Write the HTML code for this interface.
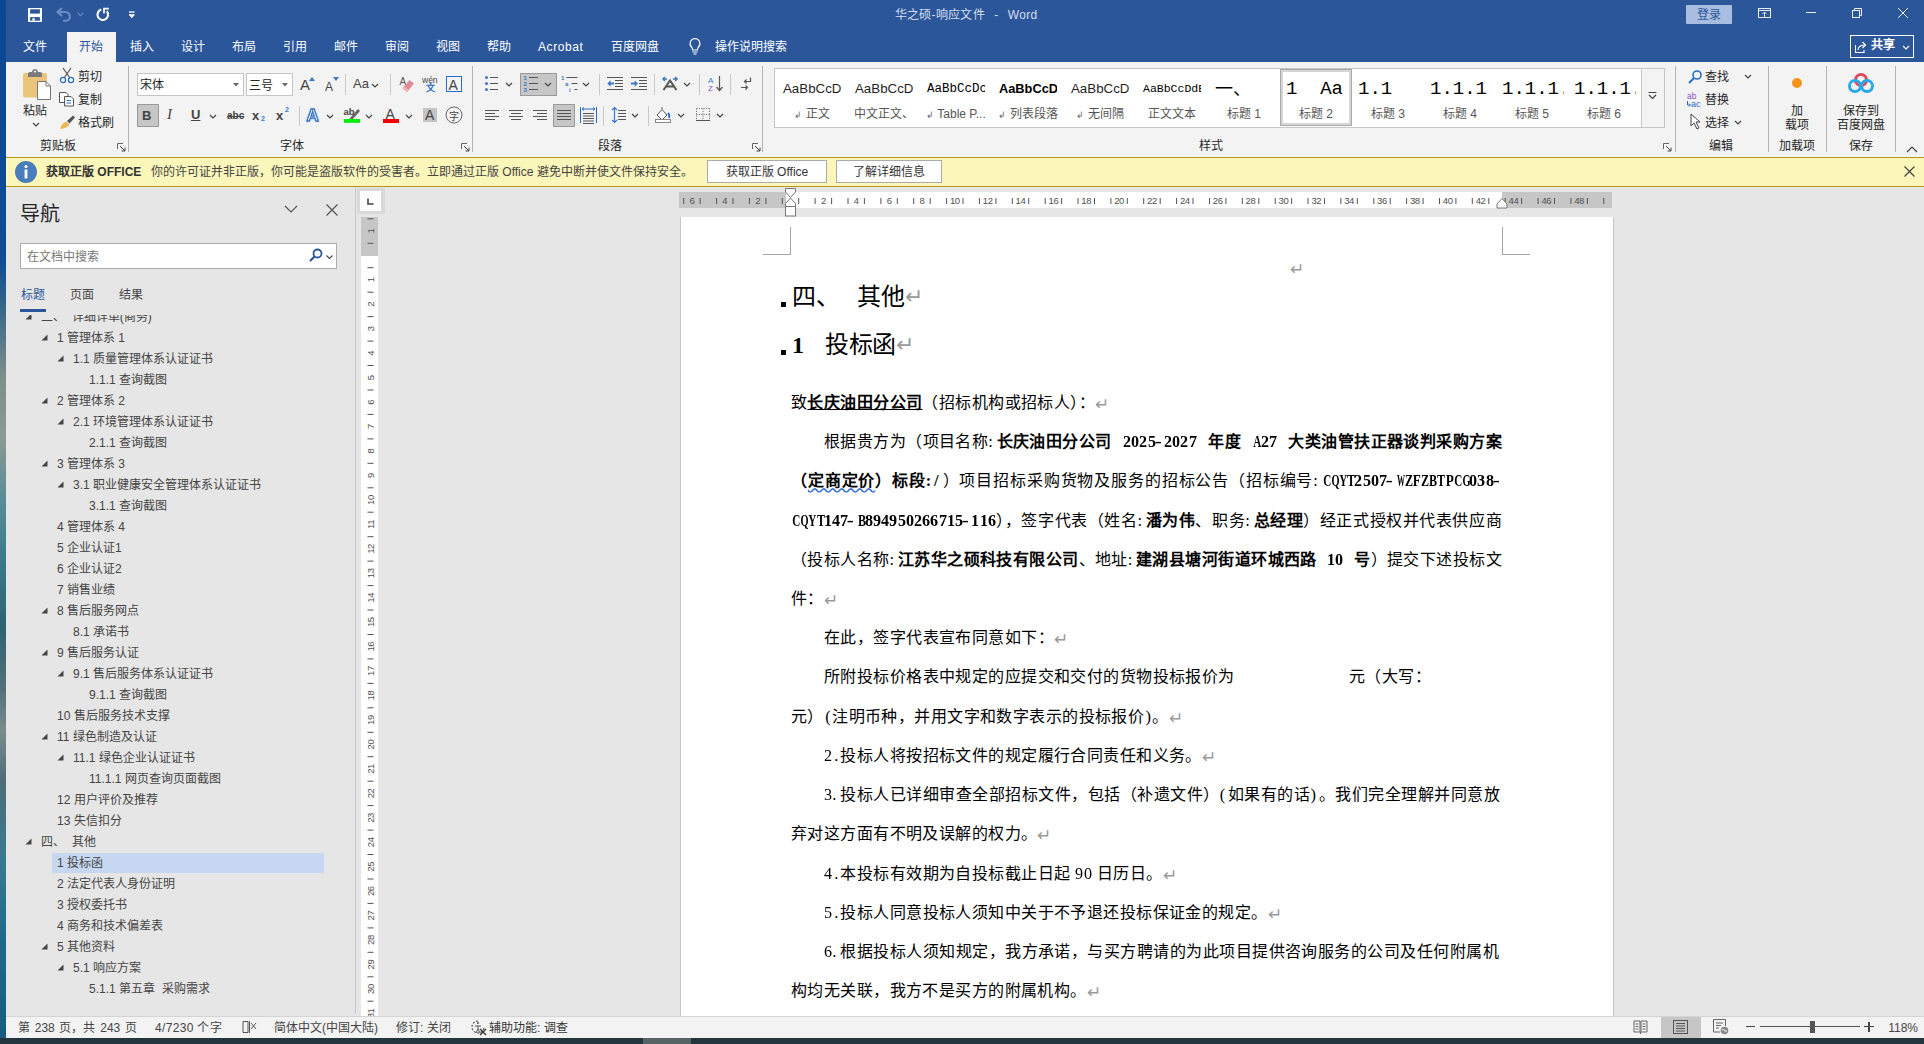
<!DOCTYPE html><html lang="zh-CN"><head><meta charset="utf-8"><style>
*{margin:0;padding:0;box-sizing:border-box}
html,body{width:1924px;height:1044px;overflow:hidden;background:#e6e6e6;font-family:"Liberation Sans",sans-serif}
.a{position:absolute}
.t{position:absolute;white-space:nowrap}
</style></head><body>
<div class="a" style="left:0px;top:0px;width:1924px;height:62px;background:#2b579a;"></div>
<div class="a" style="left:6px;top:62px;width:1918px;height:95px;background:#f3f3f3;"></div>
<div class="a" style="left:0px;top:0px;width:6px;height:1044px;background:linear-gradient(180deg,#0b4793 0%,#0e4c94 25%,#3b6a88 30%,#7d8f8c 36%,#8b9a92 42%,#5f8f98 47%,#3c7c8c 53%,#2d6372 60%,#52707a 66%,#7a8c8e 70%,#4c6c78 75%,#3a7a90 82%,#1d6a8c 90%,#175a80 100%)"></div>
<svg class="a" style="left:28px;top:8px;" width="14" height="14" viewBox="0 0 14 14"><rect x="0" y="0" width="14" height="14" rx="0.8" fill="#fff"/><rect x="2.1" y="1.3" width="9.8" height="4.3" fill="#2b579a"/><rect x="2.1" y="9.1" width="9.8" height="3.6" fill="#2b579a"/><rect x="4.3" y="10.3" width="2.5" height="2.4" fill="#fff"/></svg>
<svg class="a" style="left:55px;top:6px;" width="18" height="18" viewBox="0 0 18 18"><path d="M2.5 6 L6.5 2.5 M2.5 6 L6.5 9.5" fill="none" stroke="#6c8ec6" stroke-width="2.1" stroke-linecap="round"/><path d="M3 6 H10.5 A4.4 4.4 0 0 1 10.5 14.8 H9" fill="none" stroke="#6c8ec6" stroke-width="2.1" stroke-linecap="round"/></svg>
<svg class="a" style="left:77px;top:12px;" width="7" height="5" viewBox="0 0 7 5"><path d="M0.7 0.7 L3.5 3.8 L6.3 0.7" fill="none" stroke="#6c8ec6" stroke-width="1.1"/></svg>
<svg class="a" style="left:95px;top:6px;" width="16" height="17" viewBox="0 0 16 17"><path d="M6.3 3.6 A5.3 5.3 0 1 0 11.8 5.2" fill="none" stroke="#fff" stroke-width="2.1"/><path d="M9 7.6 V2.6 H13.8" fill="none" stroke="#fff" stroke-width="1.7"/></svg>
<svg class="a" style="left:128px;top:10px;" width="8" height="10" viewBox="0 0 8 10"><rect x="1" y="1.4" width="5.6" height="1.3" fill="#fff"/><rect x="1" y="4.2" width="5.6" height="1" fill="#fff"/><path d="M1 5 L6.6 5 L3.8 8.2 Z" fill="#fff"/></svg>
<div class="t" style="left:666px;width:600px;text-align:center;top:5.8px;line-height:18px;font-size:12px;color:#d5deee;font-weight:normal;font-family:'Liberation Sans', sans-serif;white-space:pre;letter-spacing:0.3px;word-spacing:1px">华之硕-响应文件  -  Word</div>
<div class="a" style="left:1686px;top:5px;width:46px;height:19px;background:#a8bddf;border-radius:1px"></div>
<div class="t" style="left:1409px;width:600px;text-align:center;top:5.8px;line-height:18px;font-size:12px;color:#2b579a;font-weight:normal;font-family:'Liberation Sans', sans-serif;">登录</div>
<svg class="a" style="left:1757px;top:7px;" width="15" height="12" viewBox="0 0 15 12"><rect x="1.5" y="1.5" width="12" height="9" fill="none" stroke="#e8eef7" stroke-width="1"/><line x1="2" y1="3.5" x2="13" y2="3.5" stroke="#e8eef7"/><path d="M5.5 7 L7.5 5 L9.5 7 M7.5 5 V10" fill="none" stroke="#e8eef7"/></svg>
<div class="a" style="left:1806px;top:12px;width:10px;height:1px;background:#e8eef7;"></div>
<svg class="a" style="left:1851px;top:7px;" width="12" height="12" viewBox="0 0 12 12"><rect x="1.5" y="3.5" width="7" height="7" fill="none" stroke="#e8eef7"/><path d="M3.5 3.5 V1.5 H10.5 V8.5 H8.5" fill="none" stroke="#e8eef7"/></svg>
<svg class="a" style="left:1897px;top:7px;" width="12" height="12" viewBox="0 0 12 12"><path d="M1 1 L11 11 M11 1 L1 11" stroke="#e8eef7" stroke-width="1"/></svg>
<div class="a" style="left:67px;top:32px;width:49px;height:30px;background:#f3f3f3;"></div>
<div class="t" style="left:23px;top:37.7px;line-height:18px;font-size:12px;color:#ffffff;font-weight:normal;font-family:'Liberation Sans', sans-serif;">文件</div>
<div class="t" style="left:79px;top:37.7px;line-height:18px;font-size:12px;color:#2b579a;font-weight:normal;font-family:'Liberation Sans', sans-serif;">开始</div>
<div class="t" style="left:130px;top:37.7px;line-height:18px;font-size:12px;color:#ffffff;font-weight:normal;font-family:'Liberation Sans', sans-serif;">插入</div>
<div class="t" style="left:181px;top:37.7px;line-height:18px;font-size:12px;color:#ffffff;font-weight:normal;font-family:'Liberation Sans', sans-serif;">设计</div>
<div class="t" style="left:232px;top:37.7px;line-height:18px;font-size:12px;color:#ffffff;font-weight:normal;font-family:'Liberation Sans', sans-serif;">布局</div>
<div class="t" style="left:283px;top:37.7px;line-height:18px;font-size:12px;color:#ffffff;font-weight:normal;font-family:'Liberation Sans', sans-serif;">引用</div>
<div class="t" style="left:334px;top:37.7px;line-height:18px;font-size:12px;color:#ffffff;font-weight:normal;font-family:'Liberation Sans', sans-serif;">邮件</div>
<div class="t" style="left:385px;top:37.7px;line-height:18px;font-size:12px;color:#ffffff;font-weight:normal;font-family:'Liberation Sans', sans-serif;">审阅</div>
<div class="t" style="left:436px;top:37.7px;line-height:18px;font-size:12px;color:#ffffff;font-weight:normal;font-family:'Liberation Sans', sans-serif;">视图</div>
<div class="t" style="left:487px;top:37.7px;line-height:18px;font-size:12px;color:#ffffff;font-weight:normal;font-family:'Liberation Sans', sans-serif;">帮助</div>
<div class="t" style="left:538px;top:37.7px;line-height:18px;font-size:12px;color:#ffffff;font-weight:normal;font-family:'Liberation Sans', sans-serif;letter-spacing:0.6px">Acrobat</div>
<div class="t" style="left:611px;top:37.7px;line-height:18px;font-size:12px;color:#ffffff;font-weight:normal;font-family:'Liberation Sans', sans-serif;">百度网盘</div>
<div class="t" style="left:715px;top:37.7px;line-height:18px;font-size:12px;color:#ffffff;font-weight:normal;font-family:'Liberation Sans', sans-serif;">操作说明搜索</div>
<svg class="a" style="left:688px;top:37px;" width="14" height="19" viewBox="0 0 14 19"><path d="M7 1.5 A5 5 0 0 1 10.5 10 Q9.5 11 9.5 13 H4.5 Q4.5 11 3.5 10 A5 5 0 0 1 7 1.5 Z" fill="none" stroke="#fff" stroke-width="1.1"/><line x1="4.5" y1="15" x2="9.5" y2="15" stroke="#fff"/><line x1="5.5" y1="17" x2="8.5" y2="17" stroke="#fff"/></svg>
<div class="a" style="left:1850px;top:35px;width:64px;height:23px;border:1px solid #fff"></div>
<svg class="a" style="left:1854px;top:40px;" width="14" height="14" viewBox="0 0 14 14"><path d="M1.5 5 V12.5 H10 V10" fill="none" stroke="#fff" stroke-width="1.1"/><path d="M4 10 Q4.5 5 11 5 M8.5 2 L11.5 5 L8.5 8" fill="none" stroke="#fff" stroke-width="1.1"/></svg>
<div class="t" style="left:1871px;top:36.0px;line-height:18px;font-size:12px;color:#fff;font-weight:bold;font-family:'Liberation Sans', sans-serif;">共享</div>
<svg class="a" style="left:1902px;top:45px;" width="8" height="6" viewBox="0 0 8 6"><path d="M1 1 L4 4 L7 1" fill="none" stroke="#fff" stroke-width="1.1"/></svg>
<div class="a" style="left:128px;top:66px;width:1px;height:86px;background:#b4b4b4;"></div>
<div class="a" style="left:472px;top:66px;width:1px;height:86px;background:#b4b4b4;"></div>
<div class="a" style="left:762px;top:66px;width:1px;height:86px;background:#b4b4b4;"></div>
<div class="a" style="left:1675px;top:66px;width:1px;height:86px;background:#b4b4b4;"></div>
<div class="a" style="left:1768px;top:66px;width:1px;height:86px;background:#b4b4b4;"></div>
<div class="a" style="left:1826px;top:66px;width:1px;height:86px;background:#b4b4b4;"></div>
<div class="a" style="left:1895px;top:66px;width:1px;height:86px;background:#b4b4b4;"></div>
<svg class="a" style="left:21px;top:67px;" width="32" height="34" viewBox="0 0 32 34"><rect x="2" y="6" width="24" height="24.5" rx="2" fill="#ebc47b"/><path d="M7 10 V6.5 Q7 5 9 5 H11 Q11.5 2 14 2 Q16.5 2 17 5 H19 Q21 5 21 6.5 V10 Z" fill="#7a7a7a"/><circle cx="14" cy="4.6" r="1.1" fill="#f3f3f3"/><path d="M16.5 14.5 H25 L29.5 19 V32.5 H16.5 Z" fill="#fff" stroke="#777" stroke-width="1"/><path d="M25 14.5 V19 H29.5" fill="none" stroke="#777" stroke-width="1"/></svg>
<div class="t" style="left:23px;top:102.2px;line-height:18px;font-size:12px;color:#262626;font-weight:normal;font-family:'Liberation Sans', sans-serif;">粘贴</div>
<svg class="a" style="left:32px;top:122px;" width="8" height="5" viewBox="0 0 8 5"><path d="M1 1 L4 4 L7 1" fill="none" stroke="#444" stroke-width="1.2"/></svg>
<svg class="a" style="left:59px;top:67px;" width="17" height="17" viewBox="0 0 17 17"><path d="M4 1 L11 11 M12 1 L5 11" stroke="#555" stroke-width="1.2"/><circle cx="4" cy="13" r="2.6" fill="none" stroke="#2b6cc4" stroke-width="1.2"/><circle cx="12" cy="13" r="2.6" fill="none" stroke="#2b6cc4" stroke-width="1.2"/></svg>
<div class="t" style="left:78px;top:68.2px;line-height:18px;font-size:12px;color:#262626;font-weight:normal;font-family:'Liberation Sans', sans-serif;">剪切</div>
<svg class="a" style="left:58px;top:91px;" width="17" height="16" viewBox="0 0 17 16"><path d="M1.5 1.5 H8 L10 3.5 V11.5 H1.5 Z" fill="#fff" stroke="#555"/><path d="M6.5 5.5 H13 L15.5 8 V15 H6.5 Z" fill="#fff" stroke="#555"/><path d="M8.5 9.5 H13 M8.5 12 H13" stroke="#2b6cc4"/></svg>
<div class="t" style="left:78px;top:91.2px;line-height:18px;font-size:12px;color:#262626;font-weight:normal;font-family:'Liberation Sans', sans-serif;">复制</div>
<svg class="a" style="left:58px;top:114px;" width="18" height="16" viewBox="0 0 18 16"><path d="M9 7 L15 1.5 L17 3.5 L11.5 9.5 Z" fill="#555"/><path d="M2 15 Q3 10 8 7.5 L11.5 10.5 Q9 14.5 2 15 Z" fill="#e9b85a"/></svg>
<div class="t" style="left:78px;top:114.2px;line-height:18px;font-size:12px;color:#262626;font-weight:normal;font-family:'Liberation Sans', sans-serif;">格式刷</div>
<div class="t" style="left:-242px;width:600px;text-align:center;top:137.2px;line-height:18px;font-size:12px;color:#262626;font-weight:normal;font-family:'Liberation Sans', sans-serif;">剪贴板</div>
<svg class="a" style="left:117px;top:143px;" width="9" height="9" viewBox="0 0 9 9"><path d="M0.5 6 V0.5 H6" fill="none" stroke="#666" stroke-width="1"/><path d="M3 3 L8 8 M4.5 8 H8 V4.5" fill="none" stroke="#444" stroke-width="1"/></svg>
<div class="a" style="left:137px;top:73px;width:107px;height:23px;background:#fff;border:1px solid #c6c6c6"></div>
<div class="t" style="left:140px;top:76.2px;line-height:18px;font-size:12px;color:#262626;font-weight:normal;font-family:'Liberation Sans', sans-serif;">宋体</div>
<svg class="a" style="left:233px;top:83px;" width="6" height="4" viewBox="0 0 6 4"><path d="M0 0 H6 L3 3.5 Z" fill="#666"/></svg>
<div class="a" style="left:246px;top:73px;width:47px;height:23px;background:#fff;border:1px solid #c6c6c6"></div>
<div class="t" style="left:249px;top:76.7px;line-height:18px;font-size:12px;color:#262626;font-weight:normal;font-family:'Liberation Sans', sans-serif;">三号</div>
<svg class="a" style="left:282px;top:83px;" width="6" height="4" viewBox="0 0 6 4"><path d="M0 0 H6 L3 3.5 Z" fill="#666"/></svg>
<div class="t" style="left:300px;top:74.0px;line-height:22px;font-size:15px;color:#444;font-weight:normal;font-family:'Liberation Sans', sans-serif;">A</div>
<svg class="a" style="left:309px;top:77px;" width="6" height="4" viewBox="0 0 6 4"><path d="M0 4 L3 0 L6 4 Z" fill="#3c78c3"/></svg>
<div class="t" style="left:325px;top:77.7px;line-height:18px;font-size:12px;color:#444;font-weight:normal;font-family:'Liberation Sans', sans-serif;">A</div>
<svg class="a" style="left:333px;top:77px;" width="6" height="4" viewBox="0 0 6 4"><path d="M0 0 L3 4 L6 0 Z" fill="#3c78c3"/></svg>
<div class="a" style="left:345px;top:74px;width:1px;height:21px;background:#c8c8c8;"></div>
<div class="t" style="left:353px;top:74.2px;line-height:19px;font-size:13px;color:#444;font-weight:normal;font-family:'Liberation Sans', sans-serif;">Aa</div>
<svg class="a" style="left:371px;top:83px;" width="8" height="5" viewBox="0 0 8 5"><path d="M1 1 L4 4 L7 1" fill="none" stroke="#444" stroke-width="1.2"/></svg>
<div class="a" style="left:390px;top:74px;width:1px;height:21px;background:#c8c8c8;"></div>
<svg class="a" style="left:399px;top:76px;" width="17" height="17" viewBox="0 0 17 17"><text x="0.5" y="9" font-size="10" fill="#555" font-family="Liberation Sans">A</text><path d="M3.5 12.5 L10.5 4 L15 7.5 L8 16 Z" fill="#e38896"/><path d="M3.5 12.5 L5.2 10.5 L9.7 14 L8 16 Z" fill="#f0b2bc"/></svg>
<svg class="a" style="left:422px;top:75px;" width="17" height="18" viewBox="0 0 17 18"><text x="0" y="8" font-size="8.5" fill="#444" font-family="Liberation Sans">wén</text><text x="4" y="16" font-size="9" fill="#2b6cc4" font-family="Liberation Sans" font-weight="bold">文</text></svg>
<div class="a" style="left:446px;top:76px;width:16px;height:16px;border:1px solid #2b6cc4"></div>
<div class="t" style="left:448.5px;top:75.2px;line-height:21px;font-size:14px;color:#444;font-weight:normal;font-family:'Liberation Sans', sans-serif;">A</div>
<div class="a" style="left:137px;top:104px;width:22px;height:23px;background:#c6c6c6;border:1px solid #9a9a9a"></div>
<div class="t" style="left:142px;top:105.7px;line-height:19px;font-size:13px;color:#444;font-weight:bold;font-family:'Liberation Sans', sans-serif;">B</div>
<div class="t" style="left:167px;top:103.0px;line-height:22px;font-size:15px;color:#444;font-weight:normal;font-family:'Liberation Serif', serif;font-style:italic">I</div>
<div class="t" style="left:191px;top:105.2px;line-height:19px;font-size:13px;color:#444;font-weight:bold;font-family:'Liberation Sans', sans-serif;text-decoration:underline">U</div>
<svg class="a" style="left:209px;top:114px;" width="8" height="5" viewBox="0 0 8 5"><path d="M1 1 L4 4 L7 1" fill="none" stroke="#444" stroke-width="1.2"/></svg>
<div class="t" style="left:227px;top:108.2px;line-height:15px;font-size:10px;color:#444;font-weight:bold;font-family:'Liberation Sans', sans-serif;text-decoration:line-through">abc</div>
<div class="t" style="left:252px;top:105.7px;line-height:19px;font-size:13px;color:#444;font-weight:bold;font-family:'Liberation Sans', sans-serif;">x</div>
<div class="t" style="left:261px;top:114.2px;line-height:10px;font-size:7px;color:#3c78c3;font-weight:bold;font-family:'Liberation Sans', sans-serif;">2</div>
<div class="t" style="left:276px;top:105.7px;line-height:19px;font-size:13px;color:#444;font-weight:bold;font-family:'Liberation Sans', sans-serif;">x</div>
<div class="t" style="left:285px;top:104.7px;line-height:10px;font-size:7px;color:#3c78c3;font-weight:bold;font-family:'Liberation Sans', sans-serif;">2</div>
<div class="a" style="left:299px;top:106px;width:1px;height:20px;background:#c8c8c8;"></div>
<svg class="a" style="left:305px;top:106px;" width="18" height="17" viewBox="0 0 18 17"><text x="1.5" y="14.5" font-size="17" fill="#fff" stroke="#3b76c0" stroke-width="1.3" font-family="Liberation Sans" font-weight="bold" style="filter:drop-shadow(0 0 1px #a9c6ea)">A</text></svg>
<svg class="a" style="left:326px;top:114px;" width="8" height="5" viewBox="0 0 8 5"><path d="M1 1 L4 4 L7 1" fill="none" stroke="#444" stroke-width="1.2"/></svg>
<svg class="a" style="left:343px;top:106px;" width="20" height="18" viewBox="0 0 20 18"><text x="0.5" y="9" font-size="9.5" fill="#444" font-family="Liberation Sans" font-weight="bold">ab</text><path d="M7 12 L15 3 L17 5 L9 14 Z" fill="#666"/><path d="M5.5 14 L7 12 L9 14 Z" fill="#666"/><rect x="1" y="13" width="16" height="3.8" fill="#00ee00"/></svg>
<svg class="a" style="left:365px;top:114px;" width="8" height="5" viewBox="0 0 8 5"><path d="M1 1 L4 4 L7 1" fill="none" stroke="#444" stroke-width="1.2"/></svg>
<div class="t" style="left:385.5px;top:103.7px;line-height:21px;font-size:14px;color:#444;font-weight:normal;font-family:'Liberation Sans', sans-serif;">A</div>
<div class="a" style="left:383px;top:119px;width:16px;height:4px;background:#ee0000;"></div>
<svg class="a" style="left:405px;top:114px;" width="8" height="5" viewBox="0 0 8 5"><path d="M1 1 L4 4 L7 1" fill="none" stroke="#444" stroke-width="1.2"/></svg>
<div class="a" style="left:423px;top:108px;width:14px;height:14px;background:#c4c4c4;"></div>
<div class="t" style="left:425px;top:104.7px;line-height:21px;font-size:14px;color:#444;font-weight:normal;font-family:'Liberation Sans', sans-serif;">A</div>
<svg class="a" style="left:445px;top:106px;" width="18" height="18" viewBox="0 0 18 18"><circle cx="9" cy="9" r="8" fill="none" stroke="#666" stroke-width="1"/><text x="3.5" y="13.5" font-size="10" fill="#444" font-family="Liberation Sans">字</text></svg>
<div class="t" style="left:-8px;width:600px;text-align:center;top:137.2px;line-height:18px;font-size:12px;color:#262626;font-weight:normal;font-family:'Liberation Sans', sans-serif;">字体</div>
<svg class="a" style="left:461px;top:143px;" width="9" height="9" viewBox="0 0 9 9"><path d="M0.5 6 V0.5 H6" fill="none" stroke="#666" stroke-width="1"/><path d="M3 3 L8 8 M4.5 8 H8 V4.5" fill="none" stroke="#444" stroke-width="1"/></svg>
<svg class="a" style="left:484px;top:74px;" width="16" height="18" viewBox="0 0 16 18"><circle cx="2.5" cy="3.5" r="1.5" fill="#3c78c3"/><circle cx="2.5" cy="9.5" r="1.5" fill="#3c78c3"/><circle cx="2.5" cy="15.5" r="1.5" fill="#3c78c3"/><rect x="6" y="3" width="8" height="1" fill="#555"/><rect x="6" y="9" width="8" height="1" fill="#555"/><rect x="6" y="15" width="8" height="1" fill="#555"/></svg>
<svg class="a" style="left:505px;top:82px;" width="8" height="5" viewBox="0 0 8 5"><path d="M1 1 L4 4 L7 1" fill="none" stroke="#444" stroke-width="1.2"/></svg>
<div class="a" style="left:520px;top:73px;width:37px;height:23px;background:#c6c6c6;border:1px solid #9a9a9a"></div>
<svg class="a" style="left:523px;top:74px;" width="16" height="18" viewBox="0 0 16 18"><text x="0.5" y="6" font-size="6" fill="#3c78c3" font-family="Liberation Sans" font-weight="bold">1</text><text x="0.5" y="12" font-size="6" fill="#3c78c3" font-family="Liberation Sans" font-weight="bold">2</text><text x="0.5" y="18" font-size="6" fill="#3c78c3" font-family="Liberation Sans" font-weight="bold">3</text><rect x="6" y="3" width="9" height="1" fill="#555"/><rect x="6" y="9" width="9" height="1" fill="#555"/><rect x="6" y="15" width="9" height="1" fill="#555"/></svg>
<svg class="a" style="left:544px;top:82px;" width="8" height="5" viewBox="0 0 8 5"><path d="M1 1 L4 4 L7 1" fill="none" stroke="#444" stroke-width="1.2"/></svg>
<svg class="a" style="left:561px;top:74px;" width="18" height="18" viewBox="0 0 18 18"><text x="0" y="6" font-size="6" fill="#3c78c3" font-family="Liberation Sans" font-weight="bold">1</text><text x="4" y="12" font-size="6" fill="#3c78c3" font-family="Liberation Sans" font-weight="bold">a</text><text x="8" y="18" font-size="6" fill="#3c78c3" font-family="Liberation Sans" font-weight="bold">i</text><rect x="5.5" y="3" width="11" height="1" fill="#555"/><rect x="10.5" y="9" width="6" height="1" fill="#555"/><rect x="13.5" y="15" width="3" height="1" fill="#555"/></svg>
<svg class="a" style="left:582px;top:82px;" width="8" height="5" viewBox="0 0 8 5"><path d="M1 1 L4 4 L7 1" fill="none" stroke="#444" stroke-width="1.2"/></svg>
<div class="a" style="left:599px;top:74px;width:1px;height:21px;background:#c8c8c8;"></div>
<svg class="a" style="left:607px;top:74px;" width="17" height="17" viewBox="0 0 17 17"><rect x="0" y="3" width="16" height="1" fill="#555"/><rect x="8" y="6" width="8" height="1" fill="#555"/><rect x="8" y="9" width="8" height="1" fill="#555"/><rect x="8" y="12" width="8" height="1" fill="#555"/><rect x="0" y="15" width="16" height="1" fill="#555"/><path d="M0.3 9.5 L3.6 6.3 V8.6 H7 V10.4 H3.6 V12.7 Z" fill="#3c78c3"/></svg>
<svg class="a" style="left:631px;top:74px;" width="17" height="17" viewBox="0 0 17 17"><rect x="0" y="3" width="16" height="1" fill="#555"/><rect x="8" y="6" width="8" height="1" fill="#555"/><rect x="8" y="9" width="8" height="1" fill="#555"/><rect x="8" y="12" width="8" height="1" fill="#555"/><rect x="0" y="15" width="16" height="1" fill="#555"/><path d="M7 9.5 L3.7 6.3 V8.6 H0 V10.4 H3.7 V12.7 Z" fill="#3c78c3"/></svg>
<div class="a" style="left:654px;top:74px;width:1px;height:21px;background:#c8c8c8;"></div>
<svg class="a" style="left:661px;top:75px;" width="18" height="16" viewBox="0 0 18 16"><path d="M2.5 15 L9 5.5 L15.5 15 M5.5 11.5 H12.5" fill="none" stroke="#555" stroke-width="2"/><path d="M1.5 4 L4 2 M1.5 4 L4 6 M1.5 4 H6 M16.5 4 L14 2 M16.5 4 L14 6 M16.5 4 H12" fill="none" stroke="#3c78c3" stroke-width="1.3"/></svg>
<svg class="a" style="left:683px;top:82px;" width="8" height="5" viewBox="0 0 8 5"><path d="M1 1 L4 4 L7 1" fill="none" stroke="#444" stroke-width="1.2"/></svg>
<div class="a" style="left:699px;top:74px;width:1px;height:21px;background:#c8c8c8;"></div>
<svg class="a" style="left:708px;top:75px;" width="15" height="17" viewBox="0 0 15 17"><text x="0" y="8" font-size="8" fill="#3b7ad0" font-family="Liberation Sans">A</text><text x="0" y="16" font-size="8" fill="#8a4fbf" font-family="Liberation Sans">Z</text><path d="M11.5 1 V15 M8.5 12 L11.5 15.5 L14.5 12" fill="none" stroke="#555" stroke-width="1.2"/></svg>
<div class="a" style="left:730px;top:74px;width:1px;height:21px;background:#c8c8c8;"></div>
<svg class="a" style="left:740px;top:76px;" width="12" height="15" viewBox="0 0 12 15"><path d="M10.5 1.5 V5.5 H4.5 M6.5 3.5 L4.5 5.5 L6.5 7.5" fill="none" stroke="#555" stroke-width="1.2"/><path d="M1 11.5 H7.5 M5.5 9.5 L7.5 11.5 L5.5 13.5" fill="none" stroke="#555" stroke-width="1.2"/></svg>
<svg class="a" style="left:485px;top:108px;" width="14" height="14" viewBox="0 0 14 14"><rect x="0" y="2" width="14" height="1" fill="#555"/><rect x="0" y="5" width="10" height="1" fill="#555"/><rect x="0" y="8" width="14" height="1" fill="#555"/><rect x="0" y="11" width="10" height="1" fill="#555"/></svg>
<svg class="a" style="left:509px;top:108px;" width="14" height="14" viewBox="0 0 14 14"><rect x="0.0" y="2" width="14" height="1" fill="#555"/><rect x="2.0" y="5" width="10" height="1" fill="#555"/><rect x="0.0" y="8" width="14" height="1" fill="#555"/><rect x="2.0" y="11" width="10" height="1" fill="#555"/></svg>
<svg class="a" style="left:533px;top:108px;" width="14" height="14" viewBox="0 0 14 14"><rect x="0" y="2" width="14" height="1" fill="#555"/><rect x="4" y="5" width="10" height="1" fill="#555"/><rect x="0" y="8" width="14" height="1" fill="#555"/><rect x="4" y="11" width="10" height="1" fill="#555"/></svg>
<div class="a" style="left:553px;top:104px;width:22px;height:23px;background:#c6c6c6;border:1px solid #9a9a9a"></div>
<svg class="a" style="left:557px;top:108px;" width="14" height="14" viewBox="0 0 14 14"><rect x="0" y="2" width="14" height="1" fill="#555"/><rect x="0" y="5" width="14" height="1" fill="#555"/><rect x="0" y="8" width="14" height="1" fill="#555"/><rect x="0" y="11" width="14" height="1" fill="#555"/></svg>
<svg class="a" style="left:580px;top:106px;" width="17" height="18" viewBox="0 0 17 18"><rect x="3" y="7" width="11" height="1" fill="#555"/><rect x="3" y="9.5" width="11" height="1" fill="#555"/><rect x="3" y="12" width="11" height="1" fill="#555"/><rect x="3" y="14.5" width="11" height="1" fill="#555"/><rect x="3" y="17" width="11" height="1" fill="#555"/><path d="M0.5 1 V17 M16.5 1 V17" stroke="#2b6cc4" stroke-width="1"/><path d="M2 3 H15 M2 3 L4 1.5 M2 3 L4 4.5 M15 3 L13 1.5 M15 3 L13 4.5" fill="none" stroke="#2b6cc4" stroke-width="1"/></svg>
<div class="a" style="left:603px;top:106px;width:1px;height:20px;background:#c8c8c8;"></div>
<svg class="a" style="left:611px;top:106px;" width="16" height="18" viewBox="0 0 16 18"><path d="M3.5 1.5 V16.5 M1 4 L3.5 1.5 L6 4 M1 14 L3.5 16.5 L6 14" fill="none" stroke="#3c78c3" stroke-width="1.2"/><rect x="7" y="4" width="8" height="1" fill="#555"/><rect x="7" y="7" width="8" height="1" fill="#555"/><rect x="7" y="10" width="8" height="1" fill="#555"/><rect x="7" y="13" width="8" height="1" fill="#555"/></svg>
<svg class="a" style="left:631px;top:113px;" width="8" height="5" viewBox="0 0 8 5"><path d="M1 1 L4 4 L7 1" fill="none" stroke="#444" stroke-width="1.2"/></svg>
<div class="a" style="left:648px;top:106px;width:1px;height:20px;background:#c8c8c8;"></div>
<svg class="a" style="left:655px;top:106px;" width="17" height="17" viewBox="0 0 17 17"><path d="M2 9 L7 3.5 L12 9 L7 14 Z" fill="#fff" stroke="#555" stroke-width="1"/><path d="M7 3 V1" stroke="#555"/><path d="M13 7 Q15 9 14 12" fill="none" stroke="#2b6cc4" stroke-width="1.8"/><rect x="0.5" y="13.5" width="15" height="3" fill="#fff" stroke="#888"/></svg>
<svg class="a" style="left:677px;top:113px;" width="8" height="5" viewBox="0 0 8 5"><path d="M1 1 L4 4 L7 1" fill="none" stroke="#444" stroke-width="1.2"/></svg>
<svg class="a" style="left:696px;top:107px;" width="14" height="15" viewBox="0 0 14 15"><path d="M0.5 1.5 H13.5 M0.5 7.5 H13.5 M0.5 1.5 V13 M7 1.5 V13 M13.5 1.5 V13" fill="none" stroke="#666" stroke-width="1" stroke-dasharray="1 1.4"/><rect x="0" y="13" width="14" height="1" fill="#555"/></svg>
<svg class="a" style="left:716px;top:113px;" width="8" height="5" viewBox="0 0 8 5"><path d="M1 1 L4 4 L7 1" fill="none" stroke="#444" stroke-width="1.2"/></svg>
<div class="t" style="left:310px;width:600px;text-align:center;top:137.2px;line-height:18px;font-size:12px;color:#262626;font-weight:normal;font-family:'Liberation Sans', sans-serif;">段落</div>
<svg class="a" style="left:752px;top:143px;" width="9" height="9" viewBox="0 0 9 9"><path d="M0.5 6 V0.5 H6" fill="none" stroke="#666" stroke-width="1"/><path d="M3 3 L8 8 M4.5 8 H8 V4.5" fill="none" stroke="#444" stroke-width="1"/></svg>
<div class="a" style="left:774px;top:68px;width:891px;height:60px;background:#fff;border:1px solid #c6c6c6"></div>
<div class="a" style="left:1641px;top:68px;width:24px;height:60px;background:#f3f3f3;border:1px solid #c6c6c6"></div>
<svg class="a" style="left:1648px;top:92px;" width="9" height="8" viewBox="0 0 9 8"><rect x="0.5" y="0" width="8" height="1" fill="#444"/><path d="M1 3 L4.5 6.5 L8 3" fill="none" stroke="#444" stroke-width="1.2"/></svg>
<div class="a" style="left:1280px;top:69px;width:72px;height:57px;background:#fff;border:1px solid #a9a9a9;box-shadow:inset 0 0 0 2px #d5d5d5"></div>
<div class="t" style="left:783px;top:80px;width:58px;overflow:hidden;line-height:18px;font-size:13.3px;color:#1f1f1f;font-family:'Liberation Sans', sans-serif;font-weight:normal;white-space:pre">AaBbCcDc</div>
<div class="t" style="left:512px;width:600px;text-align:center;top:104.7px;line-height:18px;font-size:12px;color:#555;font-weight:normal;font-family:'Liberation Sans', sans-serif;"><span style="font-size:9px;color:#666">↲</span> 正文</div>
<div class="t" style="left:855px;top:80px;width:58px;overflow:hidden;line-height:18px;font-size:13.3px;color:#1f1f1f;font-family:'Liberation Sans', sans-serif;font-weight:normal;white-space:pre">AaBbCcDc</div>
<div class="t" style="left:584px;width:600px;text-align:center;top:104.7px;line-height:18px;font-size:12px;color:#555;font-weight:normal;font-family:'Liberation Sans', sans-serif;">中文正文、</div>
<div class="t" style="left:927px;top:80px;width:58px;overflow:hidden;line-height:18px;font-size:12.5px;color:#000;font-family:'Liberation Mono', monospace;font-weight:normal;white-space:pre">AaBbCcDc</div>
<div class="t" style="left:656px;width:600px;text-align:center;top:104.7px;line-height:18px;font-size:12px;color:#555;font-weight:normal;font-family:'Liberation Sans', sans-serif;"><span style="font-size:9px;color:#666">↲</span> Table P...</div>
<div class="t" style="left:999px;top:80px;width:58px;overflow:hidden;line-height:18px;font-size:12.8px;color:#000;font-family:'Liberation Sans', sans-serif;font-weight:bold;white-space:pre">AaBbCcDc</div>
<div class="t" style="left:728px;width:600px;text-align:center;top:104.7px;line-height:18px;font-size:12px;color:#555;font-weight:normal;font-family:'Liberation Sans', sans-serif;"><span style="font-size:9px;color:#666">↲</span> 列表段落</div>
<div class="t" style="left:1071px;top:80px;width:58px;overflow:hidden;line-height:18px;font-size:13.3px;color:#1f1f1f;font-family:'Liberation Sans', sans-serif;font-weight:normal;white-space:pre">AaBbCcDc</div>
<div class="t" style="left:800px;width:600px;text-align:center;top:104.7px;line-height:18px;font-size:12px;color:#555;font-weight:normal;font-family:'Liberation Sans', sans-serif;"><span style="font-size:9px;color:#666">↲</span> 无间隔</div>
<div class="t" style="left:1143px;top:80px;width:58px;overflow:hidden;line-height:18px;font-size:11.5px;color:#000;font-family:'Liberation Mono', monospace;font-weight:normal;white-space:pre">AaBbCcDdE</div>
<div class="t" style="left:872px;width:600px;text-align:center;top:104.7px;line-height:18px;font-size:12px;color:#555;font-weight:normal;font-family:'Liberation Sans', sans-serif;">正文文本</div>
<div class="t" style="left:1215px;top:80px;width:62px;overflow:hidden;line-height:18px;font-size:18px;color:#000;font-family:'Liberation Serif', serif;font-weight:normal;white-space:pre">一、</div>
<div class="t" style="left:944px;width:600px;text-align:center;top:104.7px;line-height:18px;font-size:12px;color:#555;font-weight:normal;font-family:'Liberation Sans', sans-serif;">标题 1</div>
<div class="t" style="left:1286px;top:80px;width:62px;overflow:hidden;line-height:18px;font-size:19px;color:#000;font-family:'Liberation Mono', monospace;font-weight:normal;white-space:pre">1  Aa</div>
<div class="t" style="left:1016px;width:600px;text-align:center;top:104.7px;line-height:18px;font-size:12px;color:#555;font-weight:normal;font-family:'Liberation Sans', sans-serif;">标题 2</div>
<div class="t" style="left:1358px;top:80px;width:62px;overflow:hidden;line-height:18px;font-size:19px;color:#000;font-family:'Liberation Mono', monospace;font-weight:normal;white-space:pre">1.1</div>
<div class="t" style="left:1088px;width:600px;text-align:center;top:104.7px;line-height:18px;font-size:12px;color:#555;font-weight:normal;font-family:'Liberation Sans', sans-serif;">标题 3</div>
<div class="t" style="left:1430px;top:80px;width:62px;overflow:hidden;line-height:18px;font-size:19px;color:#000;font-family:'Liberation Mono', monospace;font-weight:normal;white-space:pre">1.1.1</div>
<div class="t" style="left:1160px;width:600px;text-align:center;top:104.7px;line-height:18px;font-size:12px;color:#555;font-weight:normal;font-family:'Liberation Sans', sans-serif;">标题 4</div>
<div class="t" style="left:1502px;top:80px;width:62px;overflow:hidden;line-height:18px;font-size:19px;color:#000;font-family:'Liberation Mono', monospace;font-weight:normal;white-space:pre">1.1.1.</div>
<div class="t" style="left:1232px;width:600px;text-align:center;top:104.7px;line-height:18px;font-size:12px;color:#555;font-weight:normal;font-family:'Liberation Sans', sans-serif;">标题 5</div>
<div class="t" style="left:1574px;top:80px;width:62px;overflow:hidden;line-height:18px;font-size:19px;color:#000;font-family:'Liberation Mono', monospace;font-weight:normal;white-space:pre">1.1.1.</div>
<div class="t" style="left:1304px;width:600px;text-align:center;top:104.7px;line-height:18px;font-size:12px;color:#555;font-weight:normal;font-family:'Liberation Sans', sans-serif;">标题 6</div>
<div class="t" style="left:911px;width:600px;text-align:center;top:137.2px;line-height:18px;font-size:12px;color:#262626;font-weight:normal;font-family:'Liberation Sans', sans-serif;">样式</div>
<svg class="a" style="left:1663px;top:143px;" width="9" height="9" viewBox="0 0 9 9"><path d="M0.5 6 V0.5 H6" fill="none" stroke="#666" stroke-width="1"/><path d="M3 3 L8 8 M4.5 8 H8 V4.5" fill="none" stroke="#444" stroke-width="1"/></svg>
<svg class="a" style="left:1688px;top:70px;" width="14" height="14" viewBox="0 0 14 14"><circle cx="9" cy="5" r="4" fill="none" stroke="#2b6cc4" stroke-width="1.6"/><path d="M6 8 L1 13" stroke="#2b6cc4" stroke-width="2"/></svg>
<div class="t" style="left:1705px;top:68.2px;line-height:18px;font-size:12px;color:#262626;font-weight:normal;font-family:'Liberation Sans', sans-serif;">查找</div>
<svg class="a" style="left:1744px;top:74px;" width="8" height="5" viewBox="0 0 8 5"><path d="M1 1 L4 4 L7 1" fill="none" stroke="#444" stroke-width="1.2"/></svg>
<svg class="a" style="left:1686px;top:91px;" width="18" height="17" viewBox="0 0 18 17"><text x="1" y="7.5" font-size="8.5" fill="#8a4fbf" font-family="Liberation Sans">ab</text><text x="5" y="16" font-size="9" fill="#2b6cc4" font-family="Liberation Sans">ac</text><path d="M1.5 10 V14 H4 M3 12.5 L4.5 14 L3 15.5" fill="none" stroke="#2b6cc4" stroke-width="1"/></svg>
<div class="t" style="left:1705px;top:91.2px;line-height:18px;font-size:12px;color:#262626;font-weight:normal;font-family:'Liberation Sans', sans-serif;">替换</div>
<svg class="a" style="left:1690px;top:113px;" width="12" height="17" viewBox="0 0 12 17"><path d="M1 1 V13 L4 10 L7 16 L9 15 L6 9 H10 Z" fill="#fff" stroke="#444" stroke-width="1"/></svg>
<div class="t" style="left:1705px;top:114.2px;line-height:18px;font-size:12px;color:#262626;font-weight:normal;font-family:'Liberation Sans', sans-serif;">选择</div>
<svg class="a" style="left:1734px;top:120px;" width="8" height="5" viewBox="0 0 8 5"><path d="M1 1 L4 4 L7 1" fill="none" stroke="#444" stroke-width="1.2"/></svg>
<div class="t" style="left:1421px;width:600px;text-align:center;top:137.2px;line-height:18px;font-size:12px;color:#262626;font-weight:normal;font-family:'Liberation Sans', sans-serif;">编辑</div>
<svg class="a" style="left:1791px;top:77px;" width="12" height="12" viewBox="0 0 12 12"><circle cx="6" cy="6" r="5" fill="#f7941d"/></svg>
<div class="t" style="left:1497px;width:600px;text-align:center;top:102.2px;line-height:18px;font-size:12px;color:#262626;font-weight:normal;font-family:'Liberation Sans', sans-serif;">加</div>
<div class="t" style="left:1497px;width:600px;text-align:center;top:116.2px;line-height:18px;font-size:12px;color:#262626;font-weight:normal;font-family:'Liberation Sans', sans-serif;">载项</div>
<div class="t" style="left:1497px;width:600px;text-align:center;top:137.2px;line-height:18px;font-size:12px;color:#262626;font-weight:normal;font-family:'Liberation Sans', sans-serif;">加载项</div>
<svg class="a" style="left:1847px;top:72px;" width="28" height="22" viewBox="0 0 28 22"><circle cx="14" cy="8" r="5.5" fill="none" stroke="#e2475b" stroke-width="3"/><circle cx="8" cy="14" r="5.5" fill="none" stroke="#2aa8e8" stroke-width="3"/><circle cx="20" cy="14" r="5.5" fill="none" stroke="#2aa8e8" stroke-width="3"/></svg>
<div class="t" style="left:1561px;width:600px;text-align:center;top:102.2px;line-height:18px;font-size:12px;color:#262626;font-weight:normal;font-family:'Liberation Sans', sans-serif;">保存到</div>
<div class="t" style="left:1561px;width:600px;text-align:center;top:116.2px;line-height:18px;font-size:12px;color:#262626;font-weight:normal;font-family:'Liberation Sans', sans-serif;">百度网盘</div>
<div class="t" style="left:1561px;width:600px;text-align:center;top:137.2px;line-height:18px;font-size:12px;color:#262626;font-weight:normal;font-family:'Liberation Sans', sans-serif;">保存</div>
<svg class="a" style="left:1906px;top:146px;" width="12" height="7" viewBox="0 0 12 7"><path d="M1 6 L6 1 L11 6" fill="none" stroke="#444" stroke-width="1.2"/></svg>
<div class="a" style="left:6px;top:157px;width:1918px;height:30px;background:#fbf6b9;border-top:1px solid #bf9514;border-bottom:1px solid #bf9514"></div>
<svg class="a" style="left:15px;top:161px;" width="22" height="22" viewBox="0 0 22 22"><circle cx="11" cy="11" r="11" fill="#4a7dbb"/><circle cx="11" cy="5.5" r="1.6" fill="#fff"/><rect x="9.6" y="8.5" width="2.8" height="9" fill="#fff"/></svg>
<div class="t" style="left:46px;top:163.2px;line-height:18px;font-size:12px;color:#333;font-weight:bold;font-family:'Liberation Sans', sans-serif;">获取正版 OFFICE</div>
<div class="t" style="left:151px;top:163.2px;line-height:18px;font-size:12px;color:#444;font-weight:normal;font-family:'Liberation Sans', sans-serif;">你的许可证并非正版，你可能是盗版软件的受害者。立即通过正版 Office 避免中断并使文件保持安全。</div>
<div class="a" style="left:707px;top:160px;width:120px;height:23px;background:#fff;border:1px solid #ababab"></div>
<div class="t" style="left:467px;width:600px;text-align:center;top:163.2px;line-height:18px;font-size:12px;color:#333;font-weight:normal;font-family:'Liberation Sans', sans-serif;">获取正版 Office</div>
<div class="a" style="left:836px;top:160px;width:106px;height:23px;background:#fff;border:1px solid #ababab"></div>
<div class="t" style="left:589px;width:600px;text-align:center;top:163.2px;line-height:18px;font-size:12px;color:#333;font-weight:normal;font-family:'Liberation Sans', sans-serif;">了解详细信息</div>
<svg class="a" style="left:1904px;top:166px;" width="11" height="11" viewBox="0 0 11 11"><path d="M0.5 0.5 L10.5 10.5 M10.5 0.5 L0.5 10.5" stroke="#444" stroke-width="1.2"/></svg>
<div class="a" style="left:355px;top:187px;width:1px;height:827px;background:#c8c8c8;"></div>
<div class="t" style="left:20px;top:199.2px;line-height:30px;font-size:20px;color:#262626;font-weight:normal;font-family:'Liberation Sans', sans-serif;">导航</div>
<svg class="a" style="left:284px;top:205px;" width="14" height="9" viewBox="0 0 14 9"><path d="M1 1 L7 7 L13 1" fill="none" stroke="#555" stroke-width="1.2"/></svg>
<svg class="a" style="left:326px;top:204px;" width="12" height="12" viewBox="0 0 12 12"><path d="M0.5 0.5 L11.5 11.5 M11.5 0.5 L0.5 11.5" stroke="#555" stroke-width="1.2"/></svg>
<div class="a" style="left:20px;top:243px;width:317px;height:26px;background:#fff;border:1px solid #ababab"></div>
<div class="t" style="left:27px;top:248.2px;line-height:18px;font-size:12px;color:#777;font-weight:normal;font-family:'Liberation Sans', sans-serif;">在文档中搜索</div>
<svg class="a" style="left:309px;top:248px;" width="14" height="15" viewBox="0 0 14 15"><circle cx="8.5" cy="5.5" r="4" fill="none" stroke="#2b579a" stroke-width="1.8"/><path d="M5.5 8.5 L1 13" stroke="#2b579a" stroke-width="2.2"/></svg>
<svg class="a" style="left:326px;top:255px;" width="7" height="5" viewBox="0 0 7 5"><path d="M0.5 0.5 L3.5 3.5 L6.5 0.5" fill="none" stroke="#444" stroke-width="1.1"/></svg>
<div class="t" style="left:21px;top:286.2px;line-height:18px;font-size:12px;color:#2b579a;font-weight:normal;font-family:'Liberation Sans', sans-serif;">标题</div>
<div class="t" style="left:70px;top:286.2px;line-height:18px;font-size:12px;color:#444;font-weight:normal;font-family:'Liberation Sans', sans-serif;">页面</div>
<div class="t" style="left:119px;top:286.2px;line-height:18px;font-size:12px;color:#444;font-weight:normal;font-family:'Liberation Sans', sans-serif;">结果</div>
<div class="a" style="left:20px;top:309px;width:26px;height:3px;background:#2b579a;"></div>
<div class="a" style="left:6px;top:315px;width:350px;height:701px;overflow:hidden">
<svg class="a" style="left:19px;top:-2px" width="7" height="7" viewBox="0 0 7 7"><path d="M6.5 0.5 L6.5 6.5 L0.5 6.5 Z" fill="#444"/></svg>
<div class="t" style="left:35px;top:-7px;line-height:18px;font-size:12px;color:#444;white-space:pre;font-family:'Liberation Sans', sans-serif">二、  详细详单(商务)</div>
<svg class="a" style="left:35px;top:19px" width="7" height="7" viewBox="0 0 7 7"><path d="M6.5 0.5 L6.5 6.5 L0.5 6.5 Z" fill="#444"/></svg>
<div class="t" style="left:51px;top:14px;line-height:18px;font-size:12px;color:#444;white-space:pre;font-family:'Liberation Sans', sans-serif">1 管理体系 1</div>
<svg class="a" style="left:51px;top:40px" width="7" height="7" viewBox="0 0 7 7"><path d="M6.5 0.5 L6.5 6.5 L0.5 6.5 Z" fill="#444"/></svg>
<div class="t" style="left:67px;top:35px;line-height:18px;font-size:12px;color:#444;white-space:pre;font-family:'Liberation Sans', sans-serif">1.1 质量管理体系认证证书</div>
<div class="t" style="left:83px;top:56px;line-height:18px;font-size:12px;color:#444;white-space:pre;font-family:'Liberation Sans', sans-serif">1.1.1 查询截图</div>
<svg class="a" style="left:35px;top:82px" width="7" height="7" viewBox="0 0 7 7"><path d="M6.5 0.5 L6.5 6.5 L0.5 6.5 Z" fill="#444"/></svg>
<div class="t" style="left:51px;top:77px;line-height:18px;font-size:12px;color:#444;white-space:pre;font-family:'Liberation Sans', sans-serif">2 管理体系 2</div>
<svg class="a" style="left:51px;top:103px" width="7" height="7" viewBox="0 0 7 7"><path d="M6.5 0.5 L6.5 6.5 L0.5 6.5 Z" fill="#444"/></svg>
<div class="t" style="left:67px;top:98px;line-height:18px;font-size:12px;color:#444;white-space:pre;font-family:'Liberation Sans', sans-serif">2.1 环境管理体系认证证书</div>
<div class="t" style="left:83px;top:119px;line-height:18px;font-size:12px;color:#444;white-space:pre;font-family:'Liberation Sans', sans-serif">2.1.1 查询截图</div>
<svg class="a" style="left:35px;top:145px" width="7" height="7" viewBox="0 0 7 7"><path d="M6.5 0.5 L6.5 6.5 L0.5 6.5 Z" fill="#444"/></svg>
<div class="t" style="left:51px;top:140px;line-height:18px;font-size:12px;color:#444;white-space:pre;font-family:'Liberation Sans', sans-serif">3 管理体系 3</div>
<svg class="a" style="left:51px;top:166px" width="7" height="7" viewBox="0 0 7 7"><path d="M6.5 0.5 L6.5 6.5 L0.5 6.5 Z" fill="#444"/></svg>
<div class="t" style="left:67px;top:161px;line-height:18px;font-size:12px;color:#444;white-space:pre;font-family:'Liberation Sans', sans-serif">3.1 职业健康安全管理体系认证证书</div>
<div class="t" style="left:83px;top:182px;line-height:18px;font-size:12px;color:#444;white-space:pre;font-family:'Liberation Sans', sans-serif">3.1.1 查询截图</div>
<div class="t" style="left:51px;top:203px;line-height:18px;font-size:12px;color:#444;white-space:pre;font-family:'Liberation Sans', sans-serif">4 管理体系 4</div>
<div class="t" style="left:51px;top:224px;line-height:18px;font-size:12px;color:#444;white-space:pre;font-family:'Liberation Sans', sans-serif">5 企业认证1</div>
<div class="t" style="left:51px;top:245px;line-height:18px;font-size:12px;color:#444;white-space:pre;font-family:'Liberation Sans', sans-serif">6 企业认证2</div>
<div class="t" style="left:51px;top:266px;line-height:18px;font-size:12px;color:#444;white-space:pre;font-family:'Liberation Sans', sans-serif">7 销售业绩</div>
<svg class="a" style="left:35px;top:292px" width="7" height="7" viewBox="0 0 7 7"><path d="M6.5 0.5 L6.5 6.5 L0.5 6.5 Z" fill="#444"/></svg>
<div class="t" style="left:51px;top:287px;line-height:18px;font-size:12px;color:#444;white-space:pre;font-family:'Liberation Sans', sans-serif">8 售后服务网点</div>
<div class="t" style="left:67px;top:308px;line-height:18px;font-size:12px;color:#444;white-space:pre;font-family:'Liberation Sans', sans-serif">8.1 承诺书</div>
<svg class="a" style="left:35px;top:334px" width="7" height="7" viewBox="0 0 7 7"><path d="M6.5 0.5 L6.5 6.5 L0.5 6.5 Z" fill="#444"/></svg>
<div class="t" style="left:51px;top:329px;line-height:18px;font-size:12px;color:#444;white-space:pre;font-family:'Liberation Sans', sans-serif">9 售后服务认证</div>
<svg class="a" style="left:51px;top:355px" width="7" height="7" viewBox="0 0 7 7"><path d="M6.5 0.5 L6.5 6.5 L0.5 6.5 Z" fill="#444"/></svg>
<div class="t" style="left:67px;top:350px;line-height:18px;font-size:12px;color:#444;white-space:pre;font-family:'Liberation Sans', sans-serif">9.1 售后服务体系认证证书</div>
<div class="t" style="left:83px;top:371px;line-height:18px;font-size:12px;color:#444;white-space:pre;font-family:'Liberation Sans', sans-serif">9.1.1 查询截图</div>
<div class="t" style="left:51px;top:392px;line-height:18px;font-size:12px;color:#444;white-space:pre;font-family:'Liberation Sans', sans-serif">10 售后服务技术支撑</div>
<svg class="a" style="left:35px;top:418px" width="7" height="7" viewBox="0 0 7 7"><path d="M6.5 0.5 L6.5 6.5 L0.5 6.5 Z" fill="#444"/></svg>
<div class="t" style="left:51px;top:413px;line-height:18px;font-size:12px;color:#444;white-space:pre;font-family:'Liberation Sans', sans-serif">11 绿色制造及认证</div>
<svg class="a" style="left:51px;top:439px" width="7" height="7" viewBox="0 0 7 7"><path d="M6.5 0.5 L6.5 6.5 L0.5 6.5 Z" fill="#444"/></svg>
<div class="t" style="left:67px;top:434px;line-height:18px;font-size:12px;color:#444;white-space:pre;font-family:'Liberation Sans', sans-serif">11.1 绿色企业认证证书</div>
<div class="t" style="left:83px;top:455px;line-height:18px;font-size:12px;color:#444;white-space:pre;font-family:'Liberation Sans', sans-serif">11.1.1 网页查询页面截图</div>
<div class="t" style="left:51px;top:476px;line-height:18px;font-size:12px;color:#444;white-space:pre;font-family:'Liberation Sans', sans-serif">12 用户评价及推荐</div>
<div class="t" style="left:51px;top:497px;line-height:18px;font-size:12px;color:#444;white-space:pre;font-family:'Liberation Sans', sans-serif">13 失信扣分</div>
<svg class="a" style="left:19px;top:523px" width="7" height="7" viewBox="0 0 7 7"><path d="M6.5 0.5 L6.5 6.5 L0.5 6.5 Z" fill="#444"/></svg>
<div class="t" style="left:35px;top:518px;line-height:18px;font-size:12px;color:#444;white-space:pre;font-family:'Liberation Sans', sans-serif">四、  其他</div>
<div class="a" style="left:46px;top:538px;width:272px;height:20px;background:#c5d7f1"></div>
<div class="t" style="left:51px;top:539px;line-height:18px;font-size:12px;color:#444;white-space:pre;font-family:'Liberation Sans', sans-serif">1 投标函</div>
<div class="t" style="left:51px;top:560px;line-height:18px;font-size:12px;color:#444;white-space:pre;font-family:'Liberation Sans', sans-serif">2 法定代表人身份证明</div>
<div class="t" style="left:51px;top:581px;line-height:18px;font-size:12px;color:#444;white-space:pre;font-family:'Liberation Sans', sans-serif">3 授权委托书</div>
<div class="t" style="left:51px;top:602px;line-height:18px;font-size:12px;color:#444;white-space:pre;font-family:'Liberation Sans', sans-serif">4 商务和技术偏差表</div>
<svg class="a" style="left:35px;top:628px" width="7" height="7" viewBox="0 0 7 7"><path d="M6.5 0.5 L6.5 6.5 L0.5 6.5 Z" fill="#444"/></svg>
<div class="t" style="left:51px;top:623px;line-height:18px;font-size:12px;color:#444;white-space:pre;font-family:'Liberation Sans', sans-serif">5 其他资料</div>
<svg class="a" style="left:51px;top:649px" width="7" height="7" viewBox="0 0 7 7"><path d="M6.5 0.5 L6.5 6.5 L0.5 6.5 Z" fill="#444"/></svg>
<div class="t" style="left:67px;top:644px;line-height:18px;font-size:12px;color:#444;white-space:pre;font-family:'Liberation Sans', sans-serif">5.1 响应方案</div>
<div class="t" style="left:83px;top:665px;line-height:18px;font-size:12px;color:#444;white-space:pre;font-family:'Liberation Sans', sans-serif">5.1.1 第五章  采购需求</div>
</div>
<div class="a" style="left:357px;top:188px;width:28px;height:26px;background:#d9d9d9;"></div>
<div class="a" style="left:360px;top:191px;width:21px;height:20px;background:#fdfdfd;"></div>
<svg class="a" style="left:366px;top:197px;" width="9" height="9" viewBox="0 0 9 9"><path d="M2 1.5 V7 H7.5" fill="none" stroke="#444" stroke-width="1.6"/></svg>
<div class="a" style="left:679px;top:192px;width:107px;height:16px;background:#c6c6c6;"></div>
<div class="a" style="left:786px;top:192px;width:716px;height:16px;background:#ffffff;"></div>
<div class="a" style="left:1502px;top:192px;width:110px;height:16px;background:#c6c6c6;"></div>
<svg class="a" style="left:679px;top:192px;" width="933" height="16" viewBox="0 0 933 16"><rect x="4.2" y="6" width="1" height="6" fill="#555"/><rect x="20.6" y="6" width="1" height="6" fill="#555"/><rect x="37.1" y="6" width="1" height="6" fill="#555"/><rect x="53.5" y="6" width="1" height="6" fill="#555"/><rect x="69.9" y="6" width="1" height="6" fill="#555"/><rect x="86.4" y="6" width="1" height="6" fill="#555"/><rect x="102.8" y="6" width="1" height="6" fill="#555"/><rect x="119.2" y="6" width="1" height="6" fill="#555"/><rect x="135.6" y="6" width="1" height="6" fill="#555"/><rect x="152.1" y="6" width="1" height="6" fill="#555"/><rect x="168.5" y="6" width="1" height="6" fill="#555"/><rect x="184.9" y="6" width="1" height="6" fill="#555"/><rect x="201.4" y="6" width="1" height="6" fill="#555"/><rect x="217.8" y="6" width="1" height="6" fill="#555"/><rect x="234.2" y="6" width="1" height="6" fill="#555"/><rect x="250.7" y="6" width="1" height="6" fill="#555"/><rect x="267.1" y="6" width="1" height="6" fill="#555"/><rect x="283.5" y="6" width="1" height="6" fill="#555"/><rect x="299.9" y="6" width="1" height="6" fill="#555"/><rect x="316.4" y="6" width="1" height="6" fill="#555"/><rect x="332.8" y="6" width="1" height="6" fill="#555"/><rect x="349.2" y="6" width="1" height="6" fill="#555"/><rect x="365.7" y="6" width="1" height="6" fill="#555"/><rect x="382.1" y="6" width="1" height="6" fill="#555"/><rect x="398.5" y="6" width="1" height="6" fill="#555"/><rect x="415.0" y="6" width="1" height="6" fill="#555"/><rect x="431.4" y="6" width="1" height="6" fill="#555"/><rect x="447.8" y="6" width="1" height="6" fill="#555"/><rect x="464.2" y="6" width="1" height="6" fill="#555"/><rect x="480.7" y="6" width="1" height="6" fill="#555"/><rect x="497.1" y="6" width="1" height="6" fill="#555"/><rect x="513.5" y="6" width="1" height="6" fill="#555"/><rect x="530.0" y="6" width="1" height="6" fill="#555"/><rect x="546.4" y="6" width="1" height="6" fill="#555"/><rect x="562.8" y="6" width="1" height="6" fill="#555"/><rect x="579.3" y="6" width="1" height="6" fill="#555"/><rect x="595.7" y="6" width="1" height="6" fill="#555"/><rect x="612.1" y="6" width="1" height="6" fill="#555"/><rect x="628.5" y="6" width="1" height="6" fill="#555"/><rect x="645.0" y="6" width="1" height="6" fill="#555"/><rect x="661.4" y="6" width="1" height="6" fill="#555"/><rect x="677.8" y="6" width="1" height="6" fill="#555"/><rect x="694.3" y="6" width="1" height="6" fill="#555"/><rect x="710.7" y="6" width="1" height="6" fill="#555"/><rect x="727.1" y="6" width="1" height="6" fill="#555"/><rect x="743.6" y="6" width="1" height="6" fill="#555"/><rect x="760.0" y="6" width="1" height="6" fill="#555"/><rect x="776.4" y="6" width="1" height="6" fill="#555"/><rect x="792.8" y="6" width="1" height="6" fill="#555"/><rect x="809.3" y="6" width="1" height="6" fill="#555"/><rect x="825.7" y="6" width="1" height="6" fill="#555"/><rect x="842.1" y="6" width="1" height="6" fill="#555"/><rect x="858.6" y="6" width="1" height="6" fill="#555"/><rect x="875.0" y="6" width="1" height="6" fill="#555"/><rect x="891.4" y="6" width="1" height="6" fill="#555"/><rect x="907.9" y="6" width="1" height="6" fill="#555"/><rect x="924.3" y="6" width="1" height="6" fill="#555"/><text x="12.9" y="12" font-size="9.5" letter-spacing="-0.4" fill="#505050" text-anchor="middle" font-family="Liberation Sans">6</text><text x="45.8" y="12" font-size="9.5" letter-spacing="-0.4" fill="#505050" text-anchor="middle" font-family="Liberation Sans">4</text><text x="78.6" y="12" font-size="9.5" letter-spacing="-0.4" fill="#505050" text-anchor="middle" font-family="Liberation Sans">2</text><text x="144.4" y="12" font-size="9.5" letter-spacing="-0.4" fill="#505050" text-anchor="middle" font-family="Liberation Sans">2</text><text x="177.2" y="12" font-size="9.5" letter-spacing="-0.4" fill="#505050" text-anchor="middle" font-family="Liberation Sans">4</text><text x="210.1" y="12" font-size="9.5" letter-spacing="-0.4" fill="#505050" text-anchor="middle" font-family="Liberation Sans">6</text><text x="242.9" y="12" font-size="9.5" letter-spacing="-0.4" fill="#505050" text-anchor="middle" font-family="Liberation Sans">8</text><text x="275.8" y="12" font-size="9.5" letter-spacing="-0.4" fill="#505050" text-anchor="middle" font-family="Liberation Sans">10</text><text x="308.7" y="12" font-size="9.5" letter-spacing="-0.4" fill="#505050" text-anchor="middle" font-family="Liberation Sans">12</text><text x="341.5" y="12" font-size="9.5" letter-spacing="-0.4" fill="#505050" text-anchor="middle" font-family="Liberation Sans">14</text><text x="374.4" y="12" font-size="9.5" letter-spacing="-0.4" fill="#505050" text-anchor="middle" font-family="Liberation Sans">16</text><text x="407.2" y="12" font-size="9.5" letter-spacing="-0.4" fill="#505050" text-anchor="middle" font-family="Liberation Sans">18</text><text x="440.1" y="12" font-size="9.5" letter-spacing="-0.4" fill="#505050" text-anchor="middle" font-family="Liberation Sans">20</text><text x="473.0" y="12" font-size="9.5" letter-spacing="-0.4" fill="#505050" text-anchor="middle" font-family="Liberation Sans">22</text><text x="505.8" y="12" font-size="9.5" letter-spacing="-0.4" fill="#505050" text-anchor="middle" font-family="Liberation Sans">24</text><text x="538.7" y="12" font-size="9.5" letter-spacing="-0.4" fill="#505050" text-anchor="middle" font-family="Liberation Sans">26</text><text x="571.5" y="12" font-size="9.5" letter-spacing="-0.4" fill="#505050" text-anchor="middle" font-family="Liberation Sans">28</text><text x="604.4" y="12" font-size="9.5" letter-spacing="-0.4" fill="#505050" text-anchor="middle" font-family="Liberation Sans">30</text><text x="637.3" y="12" font-size="9.5" letter-spacing="-0.4" fill="#505050" text-anchor="middle" font-family="Liberation Sans">32</text><text x="670.1" y="12" font-size="9.5" letter-spacing="-0.4" fill="#505050" text-anchor="middle" font-family="Liberation Sans">34</text><text x="703.0" y="12" font-size="9.5" letter-spacing="-0.4" fill="#505050" text-anchor="middle" font-family="Liberation Sans">36</text><text x="735.8" y="12" font-size="9.5" letter-spacing="-0.4" fill="#505050" text-anchor="middle" font-family="Liberation Sans">38</text><text x="768.7" y="12" font-size="9.5" letter-spacing="-0.4" fill="#505050" text-anchor="middle" font-family="Liberation Sans">40</text><text x="801.6" y="12" font-size="9.5" letter-spacing="-0.4" fill="#505050" text-anchor="middle" font-family="Liberation Sans">42</text><text x="834.4" y="12" font-size="9.5" letter-spacing="-0.4" fill="#505050" text-anchor="middle" font-family="Liberation Sans">44</text><text x="867.3" y="12" font-size="9.5" letter-spacing="-0.4" fill="#505050" text-anchor="middle" font-family="Liberation Sans">46</text><text x="900.1" y="12" font-size="9.5" letter-spacing="-0.4" fill="#505050" text-anchor="middle" font-family="Liberation Sans">48</text></svg>
<svg class="a" style="left:785px;top:188px;" width="12" height="29" viewBox="0 0 12 29"><path d="M0.5 0.5 H10.5 V4 L5.5 9.5 L0.5 4 Z" fill="#fff" stroke="#777"/><path d="M5.5 10 L10.5 15.5 V18.5 H0.5 V15.5 Z" fill="#fff" stroke="#777"/><rect x="0.5" y="18.5" width="10" height="9.5" fill="#fff" stroke="#777"/></svg>
<svg class="a" style="left:1496px;top:198px;" width="12" height="11" viewBox="0 0 12 11"><path d="M6 0.5 L11 6 V10 H1 V6 Z" fill="#fff" stroke="#777"/></svg>
<div class="a" style="left:361px;top:217px;width:17px;height:39px;background:#c6c6c6;"></div>
<div class="a" style="left:361px;top:256px;width:17px;height:760px;background:#ffffff;"></div>
<svg class="a" style="left:361px;top:217px;" width="17" height="799" viewBox="0 0 17 799"><rect x="6.5" y="1.3" width="6" height="1" fill="#555"/><rect x="6.5" y="25.8" width="6" height="1" fill="#555"/><rect x="6.5" y="50.2" width="6" height="1" fill="#555"/><rect x="6.5" y="74.7" width="6" height="1" fill="#555"/><rect x="6.5" y="99.1" width="6" height="1" fill="#555"/><rect x="6.5" y="123.6" width="6" height="1" fill="#555"/><rect x="6.5" y="148.0" width="6" height="1" fill="#555"/><rect x="6.5" y="172.5" width="6" height="1" fill="#555"/><rect x="6.5" y="196.9" width="6" height="1" fill="#555"/><rect x="6.5" y="221.4" width="6" height="1" fill="#555"/><rect x="6.5" y="245.8" width="6" height="1" fill="#555"/><rect x="6.5" y="270.3" width="6" height="1" fill="#555"/><rect x="6.5" y="294.7" width="6" height="1" fill="#555"/><rect x="6.5" y="319.2" width="6" height="1" fill="#555"/><rect x="6.5" y="343.6" width="6" height="1" fill="#555"/><rect x="6.5" y="368.1" width="6" height="1" fill="#555"/><rect x="6.5" y="392.5" width="6" height="1" fill="#555"/><rect x="6.5" y="417.0" width="6" height="1" fill="#555"/><rect x="6.5" y="441.4" width="6" height="1" fill="#555"/><rect x="6.5" y="465.9" width="6" height="1" fill="#555"/><rect x="6.5" y="490.3" width="6" height="1" fill="#555"/><rect x="6.5" y="514.8" width="6" height="1" fill="#555"/><rect x="6.5" y="539.2" width="6" height="1" fill="#555"/><rect x="6.5" y="563.7" width="6" height="1" fill="#555"/><rect x="6.5" y="588.1" width="6" height="1" fill="#555"/><rect x="6.5" y="612.6" width="6" height="1" fill="#555"/><rect x="6.5" y="637.0" width="6" height="1" fill="#555"/><rect x="6.5" y="661.5" width="6" height="1" fill="#555"/><rect x="6.5" y="685.9" width="6" height="1" fill="#555"/><rect x="6.5" y="710.4" width="6" height="1" fill="#555"/><rect x="6.5" y="734.8" width="6" height="1" fill="#555"/><rect x="6.5" y="759.3" width="6" height="1" fill="#555"/><rect x="6.5" y="783.7" width="6" height="1" fill="#555"/><text transform="translate(13 14.1) rotate(-90)" x="0" y="0" font-size="9.5" letter-spacing="-0.4" fill="#505050" text-anchor="middle" font-family="Liberation Sans">1</text><text transform="translate(13 62.9) rotate(-90)" x="0" y="0" font-size="9.5" letter-spacing="-0.4" fill="#505050" text-anchor="middle" font-family="Liberation Sans">1</text><text transform="translate(13 87.4) rotate(-90)" x="0" y="0" font-size="9.5" letter-spacing="-0.4" fill="#505050" text-anchor="middle" font-family="Liberation Sans">2</text><text transform="translate(13 111.9) rotate(-90)" x="0" y="0" font-size="9.5" letter-spacing="-0.4" fill="#505050" text-anchor="middle" font-family="Liberation Sans">3</text><text transform="translate(13 136.3) rotate(-90)" x="0" y="0" font-size="9.5" letter-spacing="-0.4" fill="#505050" text-anchor="middle" font-family="Liberation Sans">4</text><text transform="translate(13 160.8) rotate(-90)" x="0" y="0" font-size="9.5" letter-spacing="-0.4" fill="#505050" text-anchor="middle" font-family="Liberation Sans">5</text><text transform="translate(13 185.2) rotate(-90)" x="0" y="0" font-size="9.5" letter-spacing="-0.4" fill="#505050" text-anchor="middle" font-family="Liberation Sans">6</text><text transform="translate(13 209.6) rotate(-90)" x="0" y="0" font-size="9.5" letter-spacing="-0.4" fill="#505050" text-anchor="middle" font-family="Liberation Sans">7</text><text transform="translate(13 234.1) rotate(-90)" x="0" y="0" font-size="9.5" letter-spacing="-0.4" fill="#505050" text-anchor="middle" font-family="Liberation Sans">8</text><text transform="translate(13 258.5) rotate(-90)" x="0" y="0" font-size="9.5" letter-spacing="-0.4" fill="#505050" text-anchor="middle" font-family="Liberation Sans">9</text><text transform="translate(13 283.0) rotate(-90)" x="0" y="0" font-size="9.5" letter-spacing="-0.4" fill="#505050" text-anchor="middle" font-family="Liberation Sans">10</text><text transform="translate(13 307.5) rotate(-90)" x="0" y="0" font-size="9.5" letter-spacing="-0.4" fill="#505050" text-anchor="middle" font-family="Liberation Sans">11</text><text transform="translate(13 331.9) rotate(-90)" x="0" y="0" font-size="9.5" letter-spacing="-0.4" fill="#505050" text-anchor="middle" font-family="Liberation Sans">12</text><text transform="translate(13 356.3) rotate(-90)" x="0" y="0" font-size="9.5" letter-spacing="-0.4" fill="#505050" text-anchor="middle" font-family="Liberation Sans">13</text><text transform="translate(13 380.8) rotate(-90)" x="0" y="0" font-size="9.5" letter-spacing="-0.4" fill="#505050" text-anchor="middle" font-family="Liberation Sans">14</text><text transform="translate(13 405.2) rotate(-90)" x="0" y="0" font-size="9.5" letter-spacing="-0.4" fill="#505050" text-anchor="middle" font-family="Liberation Sans">15</text><text transform="translate(13 429.7) rotate(-90)" x="0" y="0" font-size="9.5" letter-spacing="-0.4" fill="#505050" text-anchor="middle" font-family="Liberation Sans">16</text><text transform="translate(13 454.1) rotate(-90)" x="0" y="0" font-size="9.5" letter-spacing="-0.4" fill="#505050" text-anchor="middle" font-family="Liberation Sans">17</text><text transform="translate(13 478.6) rotate(-90)" x="0" y="0" font-size="9.5" letter-spacing="-0.4" fill="#505050" text-anchor="middle" font-family="Liberation Sans">18</text><text transform="translate(13 503.0) rotate(-90)" x="0" y="0" font-size="9.5" letter-spacing="-0.4" fill="#505050" text-anchor="middle" font-family="Liberation Sans">19</text><text transform="translate(13 527.5) rotate(-90)" x="0" y="0" font-size="9.5" letter-spacing="-0.4" fill="#505050" text-anchor="middle" font-family="Liberation Sans">20</text><text transform="translate(13 551.9) rotate(-90)" x="0" y="0" font-size="9.5" letter-spacing="-0.4" fill="#505050" text-anchor="middle" font-family="Liberation Sans">21</text><text transform="translate(13 576.4) rotate(-90)" x="0" y="0" font-size="9.5" letter-spacing="-0.4" fill="#505050" text-anchor="middle" font-family="Liberation Sans">22</text><text transform="translate(13 600.9) rotate(-90)" x="0" y="0" font-size="9.5" letter-spacing="-0.4" fill="#505050" text-anchor="middle" font-family="Liberation Sans">23</text><text transform="translate(13 625.3) rotate(-90)" x="0" y="0" font-size="9.5" letter-spacing="-0.4" fill="#505050" text-anchor="middle" font-family="Liberation Sans">24</text><text transform="translate(13 649.8) rotate(-90)" x="0" y="0" font-size="9.5" letter-spacing="-0.4" fill="#505050" text-anchor="middle" font-family="Liberation Sans">25</text><text transform="translate(13 674.2) rotate(-90)" x="0" y="0" font-size="9.5" letter-spacing="-0.4" fill="#505050" text-anchor="middle" font-family="Liberation Sans">26</text><text transform="translate(13 698.6) rotate(-90)" x="0" y="0" font-size="9.5" letter-spacing="-0.4" fill="#505050" text-anchor="middle" font-family="Liberation Sans">27</text><text transform="translate(13 723.1) rotate(-90)" x="0" y="0" font-size="9.5" letter-spacing="-0.4" fill="#505050" text-anchor="middle" font-family="Liberation Sans">28</text><text transform="translate(13 747.5) rotate(-90)" x="0" y="0" font-size="9.5" letter-spacing="-0.4" fill="#505050" text-anchor="middle" font-family="Liberation Sans">29</text><text transform="translate(13 772.0) rotate(-90)" x="0" y="0" font-size="9.5" letter-spacing="-0.4" fill="#505050" text-anchor="middle" font-family="Liberation Sans">30</text><text transform="translate(13 796.4) rotate(-90)" x="0" y="0" font-size="9.5" letter-spacing="-0.4" fill="#505050" text-anchor="middle" font-family="Liberation Sans">31</text></svg>
<div class="a" style="left:680px;top:217px;width:934px;height:799px;background:#ffffff;border-left:1px solid #c6c6c6;border-right:1px solid #c6c6c6"></div>
<div class="a" style="left:790px;top:227px;width:1px;height:28px;background:#a6a6a6;"></div>
<div class="a" style="left:763px;top:254px;width:28px;height:1px;background:#a6a6a6;"></div>
<div class="a" style="left:1502px;top:227px;width:1px;height:28px;background:#a6a6a6;"></div>
<div class="a" style="left:1502px;top:254px;width:28px;height:1px;background:#a6a6a6;"></div>
<style>.c{font-size:16.43px;letter-spacing:0;white-space:pre}</style>
<div class="a" style="left:781px;top:302px;width:5px;height:5px;background:#000;"></div>
<div class="t" style="left:792px;top:282.0px;line-height:30px;font-size:24px;color:#000;font-family:'Liberation Serif', serif;letter-spacing:-0.3px;"><b style="font-weight:500">四、</b><span style="display:inline-block;width:18px"></span><b style="font-weight:500">其他</b><span style="color:#999;font-weight:normal;font-family:'Liberation Sans',sans-serif;font-size:22px;vertical-align:1px">↵</span></div>
<div class="a" style="left:781px;top:350px;width:5px;height:5px;background:#000;"></div>
<div class="t" style="left:792px;top:330.0px;line-height:30px;font-size:24px;color:#000;font-family:'Liberation Serif', serif;letter-spacing:-0.3px;"><b><span style="font-family:'Liberation Serif',serif;font-size:24px;letter-spacing:0">1</span></b><span style="display:inline-block;width:21px"></span><b style="font-weight:500">投标函</b><span style="color:#999;font-weight:normal;font-family:'Liberation Sans',sans-serif;font-size:22px;vertical-align:1px">↵</span></div>
<div class="t" style="left:1290px;top:257.0px;line-height:22px;font-size:16px;color:#000;font-family:'Liberation Serif', serif;letter-spacing:0.43px;"><span style="color:#999;font-weight:normal;font-family:'Liberation Sans',sans-serif;font-size:17px;vertical-align:-1.5px">↵</span></div>
<div class="t" style="left:791px;top:392.0px;line-height:22px;font-size:16px;color:#000;font-family:'Liberation Serif', serif;letter-spacing:0.43px;">致<b style="text-decoration:underline">长庆油田分公司</b>（招标机构或招标人）：<span style="color:#999;font-weight:normal;font-family:'Liberation Sans',sans-serif;font-size:17px;vertical-align:-1.5px">↵</span></div>
<div class="t" style="left:824px;top:431.0px;line-height:22px;font-size:16px;color:#000;font-family:'Liberation Serif', serif;letter-spacing:0.43px;width:678px;text-align:justify;text-align-last:justify;text-justify:auto;">根据贵方为（项目名称<span class="c" style="display:inline-block;width:8.215px;text-align:center">:</span><b>长庆油田分公司<span style="display:inline-block;width:11.35px"></span><span class="c" style="display:inline-block;width:8.215px;text-align:center;transform:scaleX(0.980)">2</span><span class="c" style="display:inline-block;width:8.215px;text-align:center;transform:scaleX(0.980)">0</span><span class="c" style="display:inline-block;width:8.215px;text-align:center;transform:scaleX(0.980)">2</span><span class="c" style="display:inline-block;width:8.215px;text-align:center;transform:scaleX(0.980)">5</span><span class="c" style="display:inline-block;width:8.215px;text-align:center;transform:scaleX(1.276)">-</span><span class="c" style="display:inline-block;width:8.215px;text-align:center;transform:scaleX(0.980)">2</span><span class="c" style="display:inline-block;width:8.215px;text-align:center;transform:scaleX(0.980)">0</span><span class="c" style="display:inline-block;width:8.215px;text-align:center;transform:scaleX(0.980)">2</span><span class="c" style="display:inline-block;width:8.215px;text-align:center;transform:scaleX(0.980)">7</span><span style="display:inline-block;width:11.35px"></span>年度<span style="display:inline-block;width:11.35px"></span><span class="c" style="display:inline-block;width:8.215px;text-align:center;transform:scaleX(0.679)">A</span><span class="c" style="display:inline-block;width:8.215px;text-align:center;transform:scaleX(0.980)">2</span><span class="c" style="display:inline-block;width:8.215px;text-align:center;transform:scaleX(0.980)">7</span><span style="display:inline-block;width:11.35px"></span>大类油管扶正器谈判采购方案</b></div>
<div class="t" style="left:791px;top:470.0px;line-height:22px;font-size:16px;color:#000;font-family:'Liberation Serif', serif;letter-spacing:0.43px;width:711px;text-align:justify;text-align-last:justify;text-justify:auto;"><b>（<span style="text-decoration:underline wavy #3b6fd8">定商定价</span>）标段<span class="c" style="display:inline-block;width:8.215px;text-align:center">:</span><span class="c" style="display:inline-block;width:8.215px;text-align:center">/</span></b>）项目招标采购货物及服务的招标公告（招标编号<span class="c" style="display:inline-block;width:8.215px;text-align:center">:</span><b><span class="c" style="display:inline-block;width:8.215px;text-align:center;transform:scaleX(0.679)">C</span><span class="c" style="display:inline-block;width:8.215px;text-align:center;transform:scaleX(0.630)">Q</span><span class="c" style="display:inline-block;width:8.215px;text-align:center;transform:scaleX(0.679)">Y</span><span class="c" style="display:inline-block;width:8.215px;text-align:center;transform:scaleX(0.735)">T</span><span class="c" style="display:inline-block;width:8.215px;text-align:center;transform:scaleX(0.980)">2</span><span class="c" style="display:inline-block;width:8.215px;text-align:center;transform:scaleX(0.980)">5</span><span class="c" style="display:inline-block;width:8.215px;text-align:center;transform:scaleX(0.980)">0</span><span class="c" style="display:inline-block;width:8.215px;text-align:center;transform:scaleX(0.980)">7</span><span class="c" style="display:inline-block;width:8.215px;text-align:center;transform:scaleX(1.276)">-</span><span class="c" style="display:inline-block;width:8.215px;text-align:center;transform:scaleX(0.490)">W</span><span class="c" style="display:inline-block;width:8.215px;text-align:center;transform:scaleX(0.735)">Z</span><span class="c" style="display:inline-block;width:8.215px;text-align:center;transform:scaleX(0.802)">F</span><span class="c" style="display:inline-block;width:8.215px;text-align:center;transform:scaleX(0.735)">Z</span><span class="c" style="display:inline-block;width:8.215px;text-align:center;transform:scaleX(0.735)">B</span><span class="c" style="display:inline-block;width:8.215px;text-align:center;transform:scaleX(0.735)">T</span><span class="c" style="display:inline-block;width:8.215px;text-align:center;transform:scaleX(0.802)">P</span><span class="c" style="display:inline-block;width:8.215px;text-align:center;transform:scaleX(0.679)">C</span><span class="c" style="display:inline-block;width:8.215px;text-align:center;transform:scaleX(0.630)">G</span><span class="c" style="display:inline-block;width:8.215px;text-align:center;transform:scaleX(0.980)">0</span><span class="c" style="display:inline-block;width:8.215px;text-align:center;transform:scaleX(0.980)">3</span><span class="c" style="display:inline-block;width:8.215px;text-align:center;transform:scaleX(0.980)">8</span><span class="c" style="display:inline-block;width:8.215px;text-align:center;transform:scaleX(1.276)">-</span></b></div>
<div class="t" style="left:791px;top:510.0px;line-height:22px;font-size:16px;color:#000;font-family:'Liberation Serif', serif;letter-spacing:0.43px;width:711px;text-align:justify;text-align-last:justify;text-justify:auto;"><b><span class="c" style="display:inline-block;width:8.215px;text-align:center;transform:scaleX(0.679)">C</span><span class="c" style="display:inline-block;width:8.215px;text-align:center;transform:scaleX(0.630)">Q</span><span class="c" style="display:inline-block;width:8.215px;text-align:center;transform:scaleX(0.679)">Y</span><span class="c" style="display:inline-block;width:8.215px;text-align:center;transform:scaleX(0.735)">T</span><span class="c" style="display:inline-block;width:8.215px;text-align:center;transform:scaleX(0.980)">1</span><span class="c" style="display:inline-block;width:8.215px;text-align:center;transform:scaleX(0.980)">4</span><span class="c" style="display:inline-block;width:8.215px;text-align:center;transform:scaleX(0.980)">7</span><span class="c" style="display:inline-block;width:8.215px;text-align:center;transform:scaleX(1.276)">-</span><span class="c" style="display:inline-block;width:8.215px;text-align:center;transform:scaleX(0.735)">B</span><span class="c" style="display:inline-block;width:8.215px;text-align:center;transform:scaleX(0.980)">8</span><span class="c" style="display:inline-block;width:8.215px;text-align:center;transform:scaleX(0.980)">9</span><span class="c" style="display:inline-block;width:8.215px;text-align:center;transform:scaleX(0.980)">4</span><span class="c" style="display:inline-block;width:8.215px;text-align:center;transform:scaleX(0.980)">9</span><span class="c" style="display:inline-block;width:8.215px;text-align:center;transform:scaleX(0.980)">5</span><span class="c" style="display:inline-block;width:8.215px;text-align:center;transform:scaleX(0.980)">0</span><span class="c" style="display:inline-block;width:8.215px;text-align:center;transform:scaleX(0.980)">2</span><span class="c" style="display:inline-block;width:8.215px;text-align:center;transform:scaleX(0.980)">6</span><span class="c" style="display:inline-block;width:8.215px;text-align:center;transform:scaleX(0.980)">6</span><span class="c" style="display:inline-block;width:8.215px;text-align:center;transform:scaleX(0.980)">7</span><span class="c" style="display:inline-block;width:8.215px;text-align:center;transform:scaleX(0.980)">1</span><span class="c" style="display:inline-block;width:8.215px;text-align:center;transform:scaleX(0.980)">5</span><span class="c" style="display:inline-block;width:8.215px;text-align:center;transform:scaleX(1.276)">-</span><span class="c" style="display:inline-block;width:8.215px;text-align:center;transform:scaleX(0.980)">1</span><span class="c" style="display:inline-block;width:8.215px;text-align:center;transform:scaleX(0.980)">1</span><span class="c" style="display:inline-block;width:8.215px;text-align:center;transform:scaleX(0.980)">6</span></b>），签字代表（姓名<span class="c" style="display:inline-block;width:8.215px;text-align:center">:</span><b>潘为伟</b>、职务<span class="c" style="display:inline-block;width:8.215px;text-align:center">:</span><b>总经理</b>）经正式授权并代表供应商</div>
<div class="t" style="left:791px;top:549.0px;line-height:22px;font-size:16px;color:#000;font-family:'Liberation Serif', serif;letter-spacing:0.43px;width:711px;text-align:justify;text-align-last:justify;text-justify:auto;">（投标人名称<span class="c" style="display:inline-block;width:8.215px;text-align:center">:</span><b>江苏华之硕科技有限公司</b>、地址<span class="c" style="display:inline-block;width:8.215px;text-align:center">:</span><b>建湖县塘河街道环城西路<span style="display:inline-block;width:10.43px"></span><span class="c" style="display:inline-block;width:8.215px;text-align:center;transform:scaleX(0.980)">1</span><span class="c" style="display:inline-block;width:8.215px;text-align:center;transform:scaleX(0.980)">0</span><span style="display:inline-block;width:10.43px"></span>号</b>）提交下述投标文</div>
<div class="t" style="left:791px;top:588.0px;line-height:22px;font-size:16px;color:#000;font-family:'Liberation Serif', serif;letter-spacing:0.43px;">件：<span style="color:#999;font-weight:normal;font-family:'Liberation Sans',sans-serif;font-size:17px;vertical-align:-1.5px">↵</span></div>
<div class="t" style="left:824px;top:627.0px;line-height:22px;font-size:16px;color:#000;font-family:'Liberation Serif', serif;letter-spacing:0.43px;">在此，签字代表宣布同意如下：<span style="color:#999;font-weight:normal;font-family:'Liberation Sans',sans-serif;font-size:17px;vertical-align:-1.5px">↵</span></div>
<div class="t" style="left:824px;top:666.0px;line-height:22px;font-size:16px;color:#000;font-family:'Liberation Serif', serif;letter-spacing:0.43px;">所附投标价格表中规定的应提交和交付的货物投标报价为</div>
<div class="t" style="left:1349px;top:666.0px;line-height:22px;font-size:16px;color:#000;font-family:'Liberation Serif', serif;letter-spacing:0.43px;">元（大写：</div>
<div class="t" style="left:791px;top:706.0px;line-height:22px;font-size:16px;color:#000;font-family:'Liberation Serif', serif;letter-spacing:0.43px;">元）<span class="c" style="display:inline-block;width:8.215px;text-align:center">(</span>注明币种，并用文字和数字表示的投标报价<span class="c" style="display:inline-block;width:8.215px;text-align:center">)</span>。<span style="color:#999;font-weight:normal;font-family:'Liberation Sans',sans-serif;font-size:17px;vertical-align:-1.5px">↵</span></div>
<div class="t" style="left:824px;top:745.0px;line-height:22px;font-size:16px;color:#000;font-family:'Liberation Serif', serif;letter-spacing:0.43px;"><span class="c" style="display:inline-block;width:8.215px;text-align:center;transform:scaleX(0.980)">2</span><span class="c" style="display:inline-block;width:8.215px;text-align:center">.</span>投标人将按招标文件的规定履行合同责任和义务。<span style="color:#999;font-weight:normal;font-family:'Liberation Sans',sans-serif;font-size:17px;vertical-align:-1.5px">↵</span></div>
<div class="t" style="left:824px;top:784.0px;line-height:22px;font-size:16px;color:#000;font-family:'Liberation Serif', serif;letter-spacing:0.43px;width:676px;text-align:justify;text-align-last:justify;text-justify:auto;"><span class="c" style="display:inline-block;width:8.215px;text-align:center;transform:scaleX(0.980)">3</span><span class="c" style="display:inline-block;width:8.215px;text-align:center">.</span>投标人已详细审查全部招标文件，包括（补遗文件）<span class="c" style="display:inline-block;width:8.215px;text-align:center">(</span>如果有的话<span class="c" style="display:inline-block;width:8.215px;text-align:center">)</span>。我们完全理解并同意放</div>
<div class="t" style="left:791px;top:823.0px;line-height:22px;font-size:16px;color:#000;font-family:'Liberation Serif', serif;letter-spacing:0.43px;">弃对这方面有不明及误解的权力。<span style="color:#999;font-weight:normal;font-family:'Liberation Sans',sans-serif;font-size:17px;vertical-align:-1.5px">↵</span></div>
<div class="t" style="left:824px;top:863.0px;line-height:22px;font-size:16px;color:#000;font-family:'Liberation Serif', serif;letter-spacing:0.43px;"><span class="c" style="display:inline-block;width:8.215px;text-align:center;transform:scaleX(0.980)">4</span><span class="c" style="display:inline-block;width:8.215px;text-align:center">.</span>本投标有效期为自投标截止日起<span style="display:inline-block;width:5px"></span><span class="c" style="display:inline-block;width:8.215px;text-align:center;transform:scaleX(0.980)">9</span><span class="c" style="display:inline-block;width:8.215px;text-align:center;transform:scaleX(0.980)">0</span><span style="display:inline-block;width:5px"></span>日历日。<span style="color:#999;font-weight:normal;font-family:'Liberation Sans',sans-serif;font-size:17px;vertical-align:-1.5px">↵</span></div>
<div class="t" style="left:824px;top:902.0px;line-height:22px;font-size:16px;color:#000;font-family:'Liberation Serif', serif;letter-spacing:0.43px;"><span class="c" style="display:inline-block;width:8.215px;text-align:center;transform:scaleX(0.980)">5</span><span class="c" style="display:inline-block;width:8.215px;text-align:center">.</span>投标人同意投标人须知中关于不予退还投标保证金的规定。<span style="color:#999;font-weight:normal;font-family:'Liberation Sans',sans-serif;font-size:17px;vertical-align:-1.5px">↵</span></div>
<div class="t" style="left:824px;top:941.0px;line-height:22px;font-size:16px;color:#000;font-family:'Liberation Serif', serif;letter-spacing:0.43px;width:675px;text-align:justify;text-align-last:justify;text-justify:auto;"><span class="c" style="display:inline-block;width:8.215px;text-align:center;transform:scaleX(0.980)">6</span><span class="c" style="display:inline-block;width:8.215px;text-align:center">.</span>根据投标人须知规定，我方承诺，与买方聘请的为此项目提供咨询服务的公司及任何附属机</div>
<div class="t" style="left:791px;top:980.0px;line-height:22px;font-size:16px;color:#000;font-family:'Liberation Serif', serif;letter-spacing:0.43px;">构均无关联，我方不是买方的附属机构。<span style="color:#999;font-weight:normal;font-family:'Liberation Sans',sans-serif;font-size:17px;vertical-align:-1.5px">↵</span></div>
<div class="a" style="left:6px;top:1016px;width:1918px;height:22px;background:#f3f3f3;border-top:1px solid #d4d4d4"></div>
<div class="a" style="left:0px;top:1038px;width:1924px;height:6px;background:#23353d;"></div>
<div class="a" style="left:643px;top:1038px;width:48px;height:6px;background:#566466;"></div>
<div class="t" style="left:18px;top:1018.5px;line-height:18px;font-size:12px;color:#444;font-weight:normal;font-family:'Liberation Sans', sans-serif;white-space:pre;word-spacing:1.4px">第 238 页，共 243 页</div>
<div class="t" style="left:155px;top:1018.5px;line-height:18px;font-size:12px;color:#444;font-weight:normal;font-family:'Liberation Sans', sans-serif;letter-spacing:0.35px">4/7230 个字</div>
<svg class="a" style="left:242px;top:1020px;" width="15" height="14" viewBox="0 0 15 14"><path d="M1 1.5 H6 V12.5 H1 Z M7.5 1 V13" fill="none" stroke="#555" stroke-width="1"/><path d="M9 3 L14 9 M14 3 L9 9" stroke="#555" stroke-width="1"/></svg>
<div class="t" style="left:274px;top:1018.5px;line-height:18px;font-size:12px;color:#444;font-weight:normal;font-family:'Liberation Sans', sans-serif;">简体中文(中国大陆)</div>
<div class="t" style="left:396px;top:1018.5px;line-height:18px;font-size:12px;color:#444;font-weight:normal;font-family:'Liberation Sans', sans-serif;white-space:pre">修订: 关闭</div>
<svg class="a" style="left:470px;top:1019px;" width="17" height="17" viewBox="0 0 17 17"><path d="M8 2 A6 6 0 1 0 14 8" fill="none" stroke="#555" stroke-width="1.2" stroke-dasharray="2 1.5"/><circle cx="8" cy="4" r="1" fill="#555"/><path d="M5 7 H11 M8 7 V10 L6 14 M8 10 L10 14" fill="none" stroke="#555"/><path d="M10 10 L16 16 M16 10 L10 16" stroke="#333" stroke-width="1.4"/></svg>
<div class="t" style="left:489px;top:1018.5px;line-height:18px;font-size:12px;color:#333;font-weight:normal;font-family:'Liberation Sans', sans-serif;white-space:pre">辅助功能: 调查</div>
<svg class="a" style="left:1633px;top:1019px;" width="15" height="15" viewBox="0 0 15 15"><path d="M1 2 H7 V13 H1 Z M8 2 H14 V13 H8 Z" fill="none" stroke="#666"/><path d="M2.5 5 H5.5 M2.5 7.5 H5.5 M2.5 10 H5.5 M9.5 5 H12.5 M9.5 7.5 H12.5 M9.5 10 H12.5" stroke="#666"/><path d="M7.5 13 V15" stroke="#666"/></svg>
<div class="a" style="left:1661px;top:1017px;width:40px;height:21px;background:#c6c6c6;"></div>
<svg class="a" style="left:1673px;top:1020px;" width="15" height="14" viewBox="0 0 15 14"><rect x="0.5" y="0.5" width="14" height="13" fill="none" stroke="#555"/><path d="M3 3.5 H12 M3 6 H12 M3 8.5 H12 M3 11 H12" stroke="#555"/></svg>
<svg class="a" style="left:1713px;top:1019px;" width="16" height="16" viewBox="0 0 16 16"><path d="M0.5 0.5 H12.5 V7" fill="none" stroke="#666"/><path d="M0.5 0.5 V13 H7" fill="none" stroke="#666"/><path d="M3 4 H10 M3 6.5 H8 M3 9 H6" stroke="#666"/><circle cx="11.5" cy="11.5" r="3.8" fill="#888"/><path d="M9 11 Q11 9.5 12 12 Q13 13 14 11.5" fill="none" stroke="#fff" stroke-width="1"/></svg>
<div class="a" style="left:1746px;top:1026px;width:9px;height:1.2px;background:#444;"></div>
<div class="a" style="left:1760px;top:1026px;width:100px;height:1.3px;background:#555;"></div>
<div class="a" style="left:1810px;top:1021px;width:5px;height:12px;background:#555;"></div>
<div class="a" style="left:1864px;top:1026px;width:10px;height:1.2px;background:#444;"></div>
<div class="a" style="left:1868.4px;top:1021.5px;width:1.2px;height:10px;background:#444;"></div>
<div class="t" style="right:6px;top:1018.5px;line-height:18px;font-size:12px;color:#444;font-weight:normal;font-family:'Liberation Sans', sans-serif;">118%</div>
</body></html>
